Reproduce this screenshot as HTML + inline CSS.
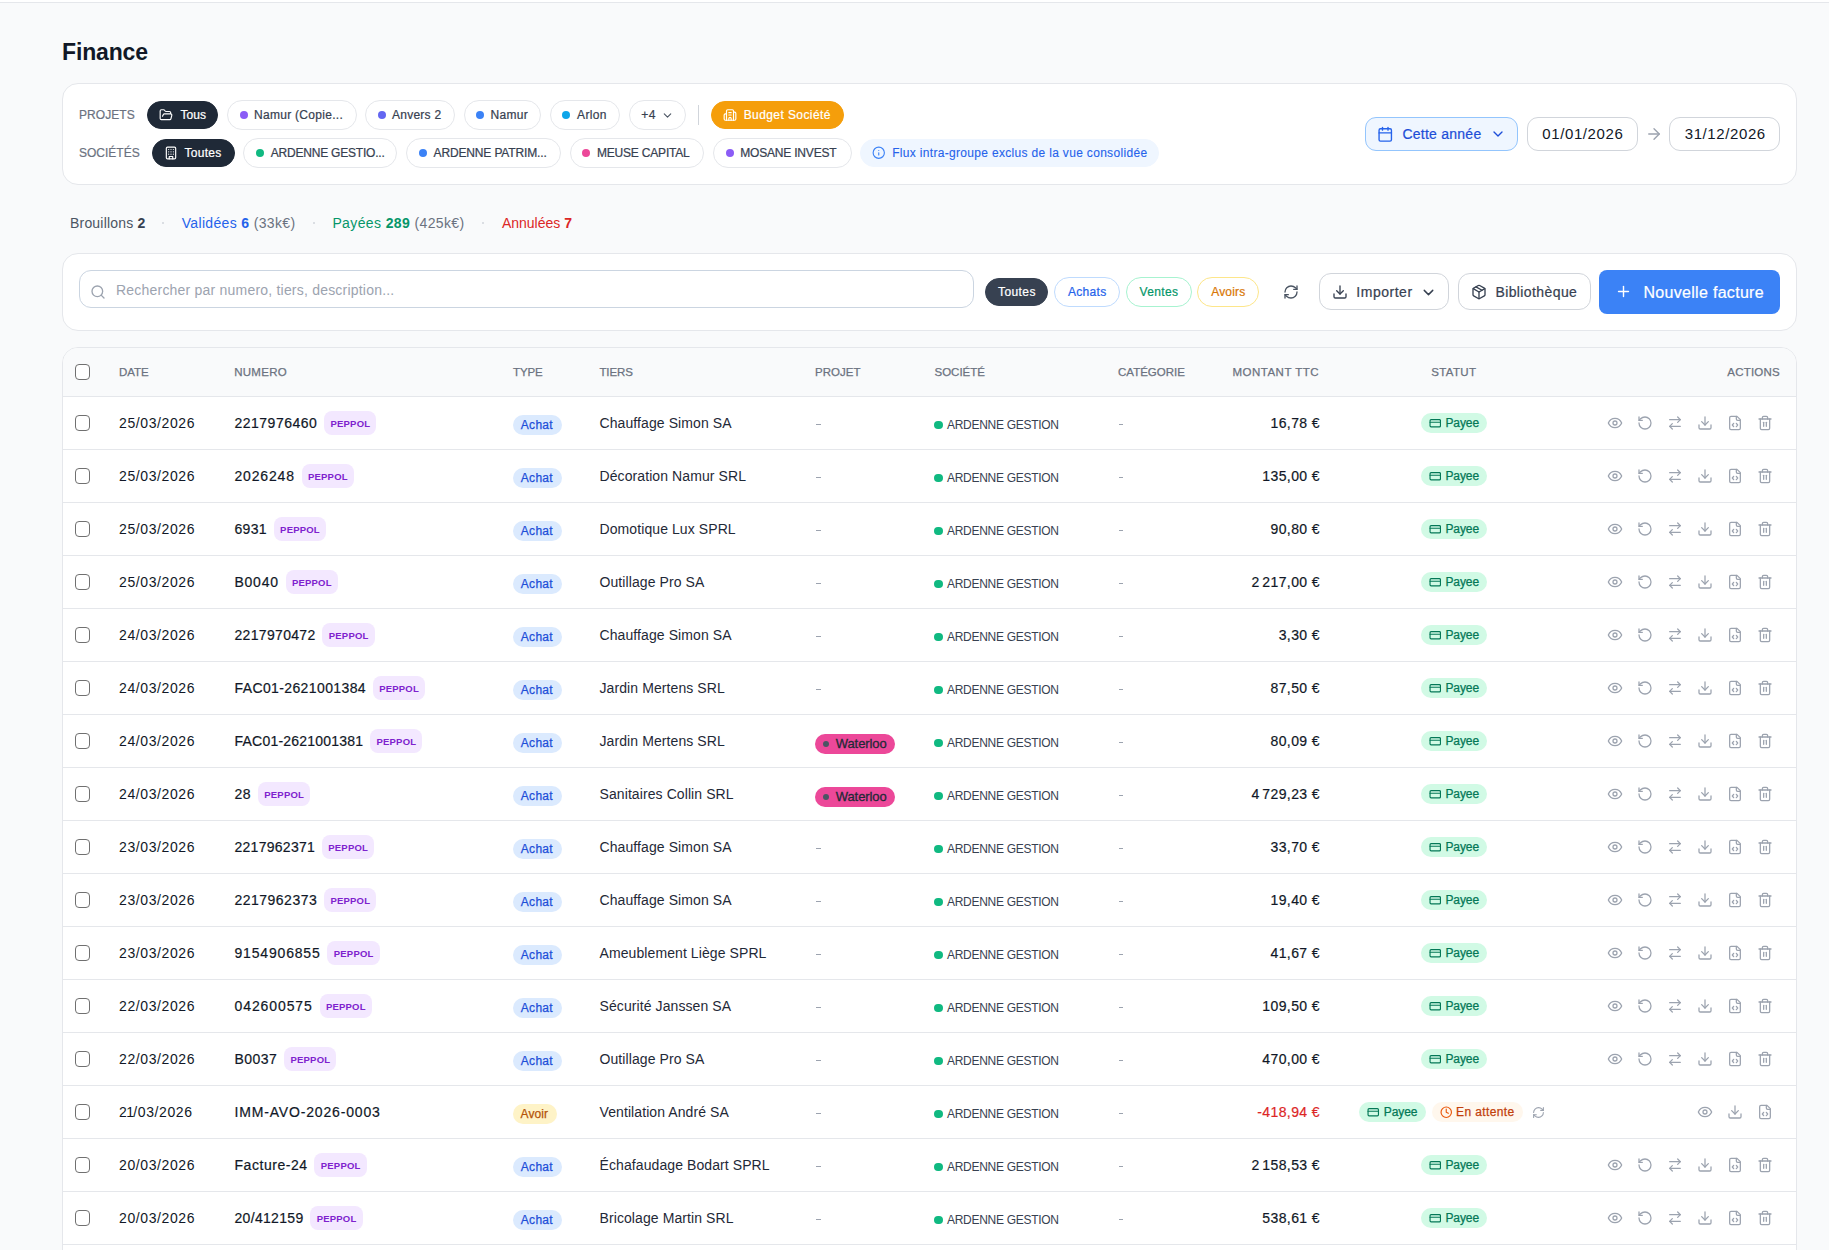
<!DOCTYPE html>
<html><head><meta charset="utf-8"><title>Finance</title>
<style>
html,body{margin:0;padding:0;}
body{width:1829px;height:1250px;overflow:hidden;background:#f9fafb;position:relative;font-family:"Liberation Sans",sans-serif;}
.b{position:absolute;box-sizing:border-box;}
.t{position:absolute;white-space:pre;}
.ic{position:absolute;display:block;}
.tbl{position:absolute;box-sizing:border-box;background:#fff;border:1px solid #e5e7eb;border-radius:16px;overflow:hidden;}
b{font-weight:700;}
</style></head><body>
<div class="b" style="left:0px;top:0px;width:1829px;height:2px;background:#fff"></div><div class="b" style="left:0px;top:2px;width:1829px;height:1px;background:#e5e7eb"></div><div class="t" style="left:62px;top:37.3px;height:30px;line-height:30px;font-size:23px;color:#111827;font-weight:700;letter-spacing:-0.15px;">Finance</div><div class="b" style="left:62px;top:83px;width:1735px;height:102px;background:#fff;border:1px solid #e5e7eb;border-radius:16px"></div><div class="t" style="left:79px;top:107.0px;height:16px;line-height:16px;font-size:12px;color:#6b7280;font-weight:400;letter-spacing:0.05px;-webkit-text-stroke:0.2px #6b7280;">PROJETS</div><div class="t" style="left:79px;top:145.0px;height:16px;line-height:16px;font-size:12px;color:#6b7280;font-weight:400;letter-spacing:0.0px;-webkit-text-stroke:0.2px #6b7280;">SOCIÉTÉS</div><div class="b" style="left:147px;top:101px;width:71.4px;height:28px;background:#1f2937;border:1px solid #1f2937;border-radius:999px;box-sizing:border-box"></div><div class="t" style="left:180.5px;top:106.5px;height:16px;line-height:16px;font-size:12px;color:#fff;font-weight:400;letter-spacing:0.02px;-webkit-text-stroke:0.22px #fff;">Tous</div><svg class="ic" style="left:158.5px;top:107.8px;width:14px;height:14px" viewBox="0 0 24 24" fill="none" stroke="#fff" stroke-width="2" stroke-linecap="round" stroke-linejoin="round"><path d="m6 14 1.5-2.9A2 2 0 0 1 9.24 10H20a2 2 0 0 1 1.94 2.5l-1.54 6a2 2 0 0 1-1.95 1.5H4a2 2 0 0 1-2-2V5a2 2 0 0 1 2-2h3.9a2 2 0 0 1 1.69.9l.81 1.2a2 2 0 0 0 1.67.9H18a2 2 0 0 1 2 2v2"/></svg><div class="b" style="left:226.5px;top:100px;width:130.0px;height:30px;background:#fff;border:1px solid #e5e7eb;border-radius:999px;box-sizing:border-box"></div><div class="b" style="left:239.5px;top:111.0px;width:8px;height:8px;background:#8b5cf6;border-radius:50%"></div><div class="t" style="left:254px;top:106.5px;height:16px;line-height:16px;font-size:12px;color:#374151;font-weight:400;letter-spacing:0.29px;-webkit-text-stroke:0.22px #374151;">Namur (Copie...</div><div class="b" style="left:365.2px;top:100px;width:90.0px;height:30px;background:#fff;border:1px solid #e5e7eb;border-radius:999px;box-sizing:border-box"></div><div class="b" style="left:378.2px;top:111.0px;width:8px;height:8px;background:#6366f1;border-radius:50%"></div><div class="t" style="left:392px;top:106.5px;height:16px;line-height:16px;font-size:12px;color:#374151;font-weight:400;letter-spacing:0.25px;-webkit-text-stroke:0.22px #374151;">Anvers 2</div><div class="b" style="left:463.7px;top:100px;width:77.50000000000006px;height:30px;background:#fff;border:1px solid #e5e7eb;border-radius:999px;box-sizing:border-box"></div><div class="b" style="left:476.4px;top:111.0px;width:8px;height:8px;background:#3b82f6;border-radius:50%"></div><div class="t" style="left:490.6px;top:106.5px;height:16px;line-height:16px;font-size:12px;color:#374151;font-weight:400;letter-spacing:0.28px;-webkit-text-stroke:0.22px #374151;">Namur</div><div class="b" style="left:549.9px;top:100px;width:70.10000000000002px;height:30px;background:#fff;border:1px solid #e5e7eb;border-radius:999px;box-sizing:border-box"></div><div class="b" style="left:562.4px;top:111.0px;width:8px;height:8px;background:#0ea5e9;border-radius:50%"></div><div class="t" style="left:577px;top:106.5px;height:16px;line-height:16px;font-size:12px;color:#374151;font-weight:400;letter-spacing:0.38px;-webkit-text-stroke:0.22px #374151;">Arlon</div><div class="b" style="left:628.8px;top:100px;width:57.0px;height:30px;background:#fff;border:1px solid #e5e7eb;border-radius:999px;box-sizing:border-box"></div><div class="t" style="left:641.3px;top:106.5px;height:16px;line-height:16px;font-size:12px;color:#374151;font-weight:400;letter-spacing:0.5px;-webkit-text-stroke:0.22px #374151;">+4</div><svg class="ic" style="left:660.5px;top:108.5px;width:13px;height:13px" viewBox="0 0 24 24" fill="none" stroke="#4b5563" stroke-width="2" stroke-linecap="round" stroke-linejoin="round"><path d="m6 9 6 6 6-6"/></svg><div class="b" style="left:698px;top:105px;width:1px;height:20px;background:#d1d5db"></div><div class="b" style="left:711px;top:101px;width:132.5px;height:28px;background:#f59e0b;border:1px solid #f59e0b;border-radius:999px;box-sizing:border-box"></div><div class="t" style="left:743.7px;top:106.5px;height:16px;line-height:16px;font-size:12px;color:#fff;font-weight:400;letter-spacing:0.41px;-webkit-text-stroke:0.22px #fff;">Budget Société</div><svg class="ic" style="left:722.5px;top:107.8px;width:14px;height:14px" viewBox="0 0 24 24" fill="none" stroke="#fff" stroke-width="2" stroke-linecap="round" stroke-linejoin="round"><path d="M10 12h4"/><path d="M10 8h4"/><path d="M14 21v-3a2 2 0 0 0-4 0v3"/><path d="M6 10H4a2 2 0 0 0-2 2v7a2 2 0 0 0 2 2h16a2 2 0 0 0 2-2V9a2 2 0 0 0-2-2h-2"/><path d="M6 21V5a2 2 0 0 1 2-2h8a2 2 0 0 1 2 2v16"/></svg><div class="b" style="left:151.8px;top:139px;width:83.19999999999999px;height:28px;background:#1f2937;border:1px solid #1f2937;border-radius:999px;box-sizing:border-box"></div><div class="t" style="left:184.5px;top:144.5px;height:16px;line-height:16px;font-size:12px;color:#fff;font-weight:400;letter-spacing:0.27px;-webkit-text-stroke:0.22px #fff;">Toutes</div><svg class="ic" style="left:164px;top:145.8px;width:14px;height:14px" viewBox="0 0 24 24" fill="none" stroke="#fff" stroke-width="2" stroke-linecap="round" stroke-linejoin="round"><rect width="16" height="20" x="4" y="2" rx="2" ry="2"/><path d="M9 22v-4h6v4"/><path d="M8 6h.01"/><path d="M16 6h.01"/><path d="M12 6h.01"/><path d="M12 10h.01"/><path d="M12 14h.01"/><path d="M16 10h.01"/><path d="M16 14h.01"/><path d="M8 10h.01"/><path d="M8 14h.01"/></svg><div class="b" style="left:243.4px;top:138px;width:153.99999999999997px;height:30px;background:#fff;border:1px solid #e5e7eb;border-radius:999px;box-sizing:border-box"></div><div class="b" style="left:256px;top:149.0px;width:8px;height:8px;background:#10b981;border-radius:50%"></div><div class="t" style="left:270.7px;top:144.5px;height:16px;line-height:16px;font-size:12px;color:#374151;font-weight:400;letter-spacing:-0.2px;-webkit-text-stroke:0.22px #374151;">ARDENNE GESTIO...</div><div class="b" style="left:406.3px;top:138px;width:154.49999999999994px;height:30px;background:#fff;border:1px solid #e5e7eb;border-radius:999px;box-sizing:border-box"></div><div class="b" style="left:419px;top:149.0px;width:8px;height:8px;background:#3b82f6;border-radius:50%"></div><div class="t" style="left:433.6px;top:144.5px;height:16px;line-height:16px;font-size:12px;color:#374151;font-weight:400;letter-spacing:-0.15px;-webkit-text-stroke:0.22px #374151;">ARDENNE PATRIM...</div><div class="b" style="left:569.7px;top:138px;width:134.5px;height:30px;background:#fff;border:1px solid #e5e7eb;border-radius:999px;box-sizing:border-box"></div><div class="b" style="left:582.3px;top:149.0px;width:8px;height:8px;background:#ec4899;border-radius:50%"></div><div class="t" style="left:597px;top:144.5px;height:16px;line-height:16px;font-size:12px;color:#374151;font-weight:400;letter-spacing:-0.2px;-webkit-text-stroke:0.22px #374151;">MEUSE CAPITAL</div><div class="b" style="left:713.4px;top:138px;width:138.20000000000005px;height:30px;background:#fff;border:1px solid #e5e7eb;border-radius:999px;box-sizing:border-box"></div><div class="b" style="left:726.2px;top:149.0px;width:8px;height:8px;background:#8b5cf6;border-radius:50%"></div><div class="t" style="left:740.3px;top:144.5px;height:16px;line-height:16px;font-size:12px;color:#374151;font-weight:400;letter-spacing:-0.2px;-webkit-text-stroke:0.22px #374151;">MOSANE INVEST</div><div class="b" style="left:859.9px;top:139px;width:299.4px;height:28px;background:#eff6ff;border:1px solid #eff6ff;border-radius:999px;box-sizing:border-box"></div><div class="t" style="left:892.2px;top:145.0px;height:16px;line-height:16px;font-size:12px;color:#2563eb;font-weight:400;letter-spacing:0.32px;-webkit-text-stroke:0.1px #2563eb;">Flux intra-groupe exclus de la vue consolidée</div><svg class="ic" style="left:872px;top:146.2px;width:13.5px;height:13.5px" viewBox="0 0 24 24" fill="none" stroke="#3b82f6" stroke-width="2" stroke-linecap="round" stroke-linejoin="round"><circle cx="12" cy="12" r="10"/><path d="M12 16v-4"/><path d="M12 8h.01"/></svg><div class="b" style="left:1365.2px;top:117px;width:153.3px;height:34px;background:#eff6ff;border:1px solid #93c5fd;border-radius:11px;box-sizing:border-box"></div><svg class="ic" style="left:1377.4px;top:125.8px;width:16.5px;height:16.5px" viewBox="0 0 24 24" fill="none" stroke="#2563eb" stroke-width="2" stroke-linecap="round" stroke-linejoin="round"><path d="M8 2v4"/><path d="M16 2v4"/><rect width="18" height="18" x="3" y="4" rx="2"/><path d="M3 10h18"/></svg><div class="t" style="left:1402.4px;top:125.0px;height:18px;line-height:18px;font-size:14px;color:#1d4ed8;font-weight:400;letter-spacing:0.25px;-webkit-text-stroke:0.22px #1d4ed8;">Cette année</div><svg class="ic" style="left:1490.4px;top:126px;width:16px;height:16px" viewBox="0 0 24 24" fill="none" stroke="#1d4ed8" stroke-width="2" stroke-linecap="round" stroke-linejoin="round"><path d="m6 9 6 6 6-6"/></svg><div class="b" style="left:1527.3px;top:117px;width:111.2px;height:34px;background:#fff;border:1px solid #d1d5db;border-radius:11px;box-sizing:border-box"></div><div class="t" style="left:1542.3px;top:124.0px;height:20px;line-height:20px;font-size:15px;color:#111827;font-weight:400;letter-spacing:0.6px;">01/01/2026</div><svg class="ic" style="left:1644.7px;top:125px;width:18px;height:18px" viewBox="0 0 24 24" fill="none" stroke="#9ca3af" stroke-width="1.8" stroke-linecap="round" stroke-linejoin="round"><path d="M5 12h14"/><path d="m12 5 7 7-7 7"/></svg><div class="b" style="left:1668.9px;top:117px;width:111.4px;height:34px;background:#fff;border:1px solid #d1d5db;border-radius:11px;box-sizing:border-box"></div><div class="t" style="left:1684.7px;top:124.0px;height:20px;line-height:20px;font-size:15px;color:#111827;font-weight:400;letter-spacing:0.6px;">31/12/2026</div><div class="t" style="left:70px;top:214.0px;height:18px;line-height:18px;font-size:14px;color:#4b5563;font-weight:400;letter-spacing:0.19px;">Brouillons <b style="color:#374151">2</b></div><div class="b" style="left:162.4px;top:222px;width:2px;height:2px;background:#d1d5db;border-radius:50%"></div><div class="t" style="left:181.7px;top:214.0px;height:18px;line-height:18px;font-size:14px;color:#2563eb;font-weight:400;letter-spacing:0.34px;">Validées <b>6</b> <span style="color:#6b7280">(33k€)</span></div><div class="b" style="left:313.4px;top:222px;width:2px;height:2px;background:#d1d5db;border-radius:50%"></div><div class="t" style="left:332.4px;top:214.0px;height:18px;line-height:18px;font-size:14px;color:#059669;font-weight:400;letter-spacing:0.38px;">Payées <b>289</b> <span style="color:#6b7280">(425k€)</span></div><div class="b" style="left:482px;top:222px;width:2px;height:2px;background:#d1d5db;border-radius:50%"></div><div class="t" style="left:501.9px;top:214.0px;height:18px;line-height:18px;font-size:14px;color:#dc2626;font-weight:400;letter-spacing:0.0px;">Annulées <b>7</b></div><div class="b" style="left:62px;top:253px;width:1735px;height:78px;background:#fff;border:1px solid #e5e7eb;border-radius:16px"></div><div class="b" style="left:78.7px;top:270px;width:895px;height:38px;background:#fff;border:1px solid #cbd5e1;border-radius:12px;box-sizing:border-box"></div><svg class="ic" style="left:90.2px;top:284px;width:16px;height:16px" viewBox="0 0 24 24" fill="none" stroke="#9ca3af" stroke-width="2" stroke-linecap="round" stroke-linejoin="round"><circle cx="11" cy="11" r="8"/><path d="m21 21-4.3-4.3"/></svg><div class="t" style="left:116px;top:280.5px;height:18px;line-height:18px;font-size:14px;color:#9ca3af;font-weight:400;letter-spacing:0.21px;">Rechercher par numero, tiers, description...</div><div class="b" style="left:985.3px;top:278px;width:63.200000000000045px;height:28px;background:#374151;border:1px solid #374151;border-radius:999px;box-sizing:border-box"></div><div class="t" style="left:998px;top:283.5px;height:16px;line-height:16px;font-size:12px;color:#fff;font-weight:400;letter-spacing:0.42px;-webkit-text-stroke:0.22px #fff;">Toutes</div><div class="b" style="left:1054.4px;top:277px;width:65.39999999999986px;height:30px;background:#fff;border:1px solid #bfdbfe;border-radius:999px;box-sizing:border-box"></div><div class="t" style="left:1068px;top:283.5px;height:16px;line-height:16px;font-size:12px;color:#2563eb;font-weight:400;letter-spacing:0.31px;-webkit-text-stroke:0.22px #2563eb;">Achats</div><div class="b" style="left:1126px;top:277px;width:65.59999999999991px;height:30px;background:#fff;border:1px solid #a7f3d0;border-radius:999px;box-sizing:border-box"></div><div class="t" style="left:1139.6px;top:283.5px;height:16px;line-height:16px;font-size:12px;color:#059669;font-weight:400;letter-spacing:0.35px;-webkit-text-stroke:0.22px #059669;">Ventes</div><div class="b" style="left:1197.4px;top:277px;width:61.299999999999955px;height:30px;background:#fff;border:1px solid #fde68a;border-radius:999px;box-sizing:border-box"></div><div class="t" style="left:1211.2px;top:283.5px;height:16px;line-height:16px;font-size:12px;color:#d97706;font-weight:400;letter-spacing:0.2px;-webkit-text-stroke:0.22px #d97706;">Avoirs</div><svg class="ic" style="left:1283px;top:283.8px;width:16px;height:16px" viewBox="0 0 24 24" fill="none" stroke="#4b5563" stroke-width="2" stroke-linecap="round" stroke-linejoin="round"><path d="M3 12a9 9 0 0 1 9-9 9.75 9.75 0 0 1 6.74 2.74L21 8"/><path d="M21 3v5h-5"/><path d="M21 12a9 9 0 0 1-9 9 9.75 9.75 0 0 1-6.74-2.74L3 16"/><path d="M8 16H3v5"/></svg><div class="b" style="left:1319.4px;top:273.4px;width:130px;height:37px;background:#fff;border:1px solid #d1d5db;border-radius:12px;box-sizing:border-box"></div><svg class="ic" style="left:1331.5px;top:283.5px;width:16px;height:16px" viewBox="0 0 24 24" fill="none" stroke="#374151" stroke-width="2" stroke-linecap="round" stroke-linejoin="round"><path d="M21 15v4a2 2 0 0 1-2 2H5a2 2 0 0 1-2-2v-4"/><polyline points="7 10 12 15 17 10"/><line x1="12" x2="12" y1="15" y2="3"/></svg><div class="t" style="left:1356.3px;top:283.0px;height:18px;line-height:18px;font-size:14px;color:#374151;font-weight:400;letter-spacing:0.52px;-webkit-text-stroke:0.22px #374151;">Importer</div><svg class="ic" style="left:1420.4px;top:283.5px;width:17px;height:17px" viewBox="0 0 24 24" fill="none" stroke="#374151" stroke-width="2" stroke-linecap="round" stroke-linejoin="round"><path d="m6 9 6 6 6-6"/></svg><div class="b" style="left:1458px;top:273.4px;width:132.5px;height:37px;background:#fff;border:1px solid #d1d5db;border-radius:12px;box-sizing:border-box"></div><svg class="ic" style="left:1470.5px;top:284px;width:16px;height:16px" viewBox="0 0 24 24" fill="none" stroke="#374151" stroke-width="2" stroke-linecap="round" stroke-linejoin="round"><path d="m7.5 4.27 9 5.15"/><path d="M21 8a2 2 0 0 0-1-1.73l-7-4a2 2 0 0 0-2 0l-7 4A2 2 0 0 0 3 8v8a2 2 0 0 0 1 1.73l7 4a2 2 0 0 0 2 0l7-4A2 2 0 0 0 21 16Z"/><path d="m3.3 7 8.7 5 8.7-5"/><path d="M12 22V12"/></svg><div class="t" style="left:1495.4px;top:283.0px;height:18px;line-height:18px;font-size:14px;color:#374151;font-weight:400;letter-spacing:0.4px;-webkit-text-stroke:0.22px #374151;">Bibliothèque</div><div class="b" style="left:1598.8px;top:270.2px;width:181.3px;height:43.4px;background:#3b82f6;border-radius:8px"></div><svg class="ic" style="left:1614.5px;top:283px;width:17px;height:17px" viewBox="0 0 24 24" fill="none" stroke="#fff" stroke-width="2" stroke-linecap="round" stroke-linejoin="round"><path d="M5 12h14"/><path d="M12 5v14"/></svg><div class="t" style="left:1643.5px;top:282.2px;height:21px;line-height:21px;font-size:16px;color:#fff;font-weight:400;letter-spacing:0.3px;-webkit-text-stroke:0.22px #fff;">Nouvelle facture</div><div class="tbl" style="left:62px;top:347px;width:1735px;height:943px"><div class="b" style="left:0px;top:0px;width:1733px;height:48px;background:#f9fafb"></div><div class="b" style="left:0px;top:48px;width:1733px;height:1px;background:#e5e7eb"></div><div class="b" style="left:11.799999999999997px;top:16.25px;width:15.5px;height:15.5px;border:1.4px solid #707070;border-radius:4px;box-sizing:border-box;background:#fff"></div><div class="t" style="left:56px;top:16.5px;height:15px;line-height:15px;font-size:11.5px;color:#6b7280;font-weight:400;letter-spacing:-0.08px;-webkit-text-stroke:0.25px #6b7280;">DATE</div><div class="t" style="left:171.2px;top:16.5px;height:15px;line-height:15px;font-size:11.5px;color:#6b7280;font-weight:400;letter-spacing:0.28px;-webkit-text-stroke:0.25px #6b7280;">NUMERO</div><div class="t" style="left:450px;top:16.5px;height:15px;line-height:15px;font-size:11.5px;color:#6b7280;font-weight:400;letter-spacing:-0.11px;-webkit-text-stroke:0.25px #6b7280;">TYPE</div><div class="t" style="left:536.4px;top:16.5px;height:15px;line-height:15px;font-size:11.5px;color:#6b7280;font-weight:400;letter-spacing:-0.1px;-webkit-text-stroke:0.25px #6b7280;">TIERS</div><div class="t" style="left:752px;top:16.5px;height:15px;line-height:15px;font-size:11.5px;color:#6b7280;font-weight:400;letter-spacing:0.05px;-webkit-text-stroke:0.25px #6b7280;">PROJET</div><div class="t" style="left:871.5px;top:16.5px;height:15px;line-height:15px;font-size:11.5px;color:#6b7280;font-weight:400;letter-spacing:0.0px;-webkit-text-stroke:0.25px #6b7280;">SOCIÉTÉ</div><div class="t" style="left:1055px;top:16.5px;height:15px;line-height:15px;font-size:11.5px;color:#6b7280;font-weight:400;letter-spacing:0.01px;-webkit-text-stroke:0.25px #6b7280;">CATÉGORIE</div><div class="t" style="left:1169.5px;top:16.5px;height:15px;line-height:15px;font-size:11.5px;color:#6b7280;font-weight:400;letter-spacing:0.49px;-webkit-text-stroke:0.25px #6b7280;">MONTANT TTC</div><div class="t" style="left:1368.2px;top:16.5px;height:15px;line-height:15px;font-size:11.5px;color:#6b7280;font-weight:400;letter-spacing:0.35px;-webkit-text-stroke:0.25px #6b7280;">STATUT</div><div class="t" style="left:1664.3px;top:16.5px;height:15px;line-height:15px;font-size:11.5px;color:#6b7280;font-weight:400;letter-spacing:0.2px;-webkit-text-stroke:0.25px #6b7280;">ACTIONS</div><div class="b" style="left:0px;top:101px;width:1733px;height:1px;background:#e5e7eb"></div><div class="b" style="left:11.799999999999997px;top:67.25px;width:15.5px;height:15.5px;border:1.4px solid #707070;border-radius:4px;box-sizing:border-box;background:#fff"></div><div class="t" style="left:56px;top:66.0px;height:18px;line-height:18px;font-size:14px;color:#111827;font-weight:400;letter-spacing:0.6px;">25/03/2026</div><div class="t" style="left:171.5px;top:66.0px;height:18px;line-height:18px;font-size:14px;color:#111827;font-weight:400;letter-spacing:0.493px;-webkit-text-stroke:0.2px #111827;">2217976460</div><div class="b" style="left:261.1px;top:63px;width:52.4px;height:24px;background:#f3e8ff;border-radius:8px"></div><div class="t" style="left:267.5px;top:69.60000000000002px;height:12px;line-height:12px;font-size:9.5px;color:#7e22ce;font-weight:700;letter-spacing:0.2px;">PEPPOL</div><div class="b" style="left:449.6px;top:67px;width:49px;height:20px;background:#dbeafe;border-radius:999px"></div><div class="t" style="left:457.79999999999995px;top:68.60000000000002px;height:16px;line-height:16px;font-size:12px;color:#1d4ed8;font-weight:400;letter-spacing:0.3px;-webkit-text-stroke:0.25px #1d4ed8;">Achat</div><div class="t" style="left:536.5px;top:66.0px;height:18px;line-height:18px;font-size:14px;color:#1f2937;font-weight:400;letter-spacing:0.09px;">Chauffage Simon SA</div><div class="b" style="left:752.9px;top:76px;width:4.8px;height:1.3px;background:#9ca3af"></div><div class="b" style="left:871.3px;top:73px;width:8.3px;height:8.3px;background:#10b981;border-radius:50%"></div><div class="t" style="left:884px;top:69.0px;height:16px;line-height:16px;font-size:12px;color:#374151;font-weight:400;letter-spacing:-0.29px;">ARDENNE GESTION</div><div class="b" style="left:1055.6px;top:75.5px;width:4.8px;height:1.3px;background:#9ca3af"></div><div class="t" style="right:476px;top:65px;height:20px;line-height:20px;font-size:14px;color:#111827;letter-spacing:0.4px;-webkit-text-stroke:0.2px #111827">16,78 €</div><div class="b" style="left:1358px;top:65px;width:66.3px;height:20px;background:#d1fae5;border-radius:999px"></div><svg class="ic" style="left:1365.5px;top:69px;width:12.5px;height:12.5px" viewBox="0 0 24 24" fill="none" stroke="#047857" stroke-width="2.2" stroke-linecap="round" stroke-linejoin="round"><rect width="20" height="14" x="2" y="5" rx="2"/><line x1="2" x2="22" y1="10" y2="10"/></svg><div class="t" style="left:1382.4px;top:67.0px;height:16px;line-height:16px;font-size:12px;color:#047857;font-weight:400;letter-spacing:-0.09px;-webkit-text-stroke:0.25px #047857;">Payee</div><svg class="ic" style="left:1544px;top:67px;width:16px;height:16px" viewBox="0 0 24 24" fill="none" stroke="#9ca3af" stroke-width="1.9" stroke-linecap="round" stroke-linejoin="round"><path d="M2 12s3-7 10-7 10 7 10 7-3 7-10 7-10-7-10-7Z"/><circle cx="12" cy="12" r="3"/></svg><svg class="ic" style="left:1574px;top:67px;width:16px;height:16px" viewBox="0 0 24 24" fill="none" stroke="#9ca3af" stroke-width="1.9" stroke-linecap="round" stroke-linejoin="round"><path d="M3 12a9 9 0 1 0 9-9 9.75 9.75 0 0 0-6.74 2.74L3 8"/><path d="M3 3v5h5"/></svg><svg class="ic" style="left:1604px;top:67px;width:16px;height:16px" viewBox="0 0 24 24" fill="none" stroke="#9ca3af" stroke-width="1.9" stroke-linecap="round" stroke-linejoin="round"><path d="m16 3 4 4-4 4"/><path d="M20 7H4"/><path d="m8 21-4-4 4-4"/><path d="M4 17h16"/></svg><svg class="ic" style="left:1634px;top:67px;width:16px;height:16px" viewBox="0 0 24 24" fill="none" stroke="#9ca3af" stroke-width="1.9" stroke-linecap="round" stroke-linejoin="round"><path d="M21 15v4a2 2 0 0 1-2 2H5a2 2 0 0 1-2-2v-4"/><polyline points="7 10 12 15 17 10"/><line x1="12" x2="12" y1="15" y2="3"/></svg><svg class="ic" style="left:1664px;top:67px;width:16px;height:16px" viewBox="0 0 24 24" fill="none" stroke="#9ca3af" stroke-width="1.9" stroke-linecap="round" stroke-linejoin="round"><path d="M10 12.5 8 15l2 2.5"/><path d="m14 12.5 2 2.5-2 2.5"/><path d="M14 2v4a2 2 0 0 0 2 2h4"/><path d="M15 2H6a2 2 0 0 0-2 2v16a2 2 0 0 0 2 2h12a2 2 0 0 0 2-2V7z"/></svg><svg class="ic" style="left:1694px;top:67px;width:16px;height:16px" viewBox="0 0 24 24" fill="none" stroke="#9ca3af" stroke-width="1.9" stroke-linecap="round" stroke-linejoin="round"><path d="M3 6h18"/><path d="M19 6v14c0 1-1 2-2 2H7c-1 0-2-1-2-2V6"/><path d="M8 6V4c0-1 1-2 2-2h4c1 0 2 1 2 2v2"/><line x1="10" x2="10" y1="11" y2="17"/><line x1="14" x2="14" y1="11" y2="17"/></svg><div class="b" style="left:0px;top:154px;width:1733px;height:1px;background:#e5e7eb"></div><div class="b" style="left:11.799999999999997px;top:120.25px;width:15.5px;height:15.5px;border:1.4px solid #707070;border-radius:4px;box-sizing:border-box;background:#fff"></div><div class="t" style="left:56px;top:119.0px;height:18px;line-height:18px;font-size:14px;color:#111827;font-weight:400;letter-spacing:0.6px;">25/03/2026</div><div class="t" style="left:171.5px;top:119.0px;height:18px;line-height:18px;font-size:14px;color:#111827;font-weight:400;letter-spacing:0.826px;-webkit-text-stroke:0.2px #111827;">2026248</div><div class="b" style="left:238.60000000000002px;top:116px;width:52.4px;height:24px;background:#f3e8ff;border-radius:8px"></div><div class="t" style="left:245.0px;top:122.60000000000002px;height:12px;line-height:12px;font-size:9.5px;color:#7e22ce;font-weight:700;letter-spacing:0.2px;">PEPPOL</div><div class="b" style="left:449.6px;top:120px;width:49px;height:20px;background:#dbeafe;border-radius:999px"></div><div class="t" style="left:457.79999999999995px;top:121.60000000000002px;height:16px;line-height:16px;font-size:12px;color:#1d4ed8;font-weight:400;letter-spacing:0.3px;-webkit-text-stroke:0.25px #1d4ed8;">Achat</div><div class="t" style="left:536.5px;top:119.0px;height:18px;line-height:18px;font-size:14px;color:#1f2937;font-weight:400;letter-spacing:0.09px;">Décoration Namur SRL</div><div class="b" style="left:752.9px;top:129px;width:4.8px;height:1.3px;background:#9ca3af"></div><div class="b" style="left:871.3px;top:126px;width:8.3px;height:8.3px;background:#10b981;border-radius:50%"></div><div class="t" style="left:884px;top:122.0px;height:16px;line-height:16px;font-size:12px;color:#374151;font-weight:400;letter-spacing:-0.29px;">ARDENNE GESTION</div><div class="b" style="left:1055.6px;top:128.5px;width:4.8px;height:1.3px;background:#9ca3af"></div><div class="t" style="right:476px;top:118px;height:20px;line-height:20px;font-size:14px;color:#111827;letter-spacing:0.4px;-webkit-text-stroke:0.2px #111827">135,00 €</div><div class="b" style="left:1358px;top:118px;width:66.3px;height:20px;background:#d1fae5;border-radius:999px"></div><svg class="ic" style="left:1365.5px;top:122px;width:12.5px;height:12.5px" viewBox="0 0 24 24" fill="none" stroke="#047857" stroke-width="2.2" stroke-linecap="round" stroke-linejoin="round"><rect width="20" height="14" x="2" y="5" rx="2"/><line x1="2" x2="22" y1="10" y2="10"/></svg><div class="t" style="left:1382.4px;top:120.0px;height:16px;line-height:16px;font-size:12px;color:#047857;font-weight:400;letter-spacing:-0.09px;-webkit-text-stroke:0.25px #047857;">Payee</div><svg class="ic" style="left:1544px;top:120px;width:16px;height:16px" viewBox="0 0 24 24" fill="none" stroke="#9ca3af" stroke-width="1.9" stroke-linecap="round" stroke-linejoin="round"><path d="M2 12s3-7 10-7 10 7 10 7-3 7-10 7-10-7-10-7Z"/><circle cx="12" cy="12" r="3"/></svg><svg class="ic" style="left:1574px;top:120px;width:16px;height:16px" viewBox="0 0 24 24" fill="none" stroke="#9ca3af" stroke-width="1.9" stroke-linecap="round" stroke-linejoin="round"><path d="M3 12a9 9 0 1 0 9-9 9.75 9.75 0 0 0-6.74 2.74L3 8"/><path d="M3 3v5h5"/></svg><svg class="ic" style="left:1604px;top:120px;width:16px;height:16px" viewBox="0 0 24 24" fill="none" stroke="#9ca3af" stroke-width="1.9" stroke-linecap="round" stroke-linejoin="round"><path d="m16 3 4 4-4 4"/><path d="M20 7H4"/><path d="m8 21-4-4 4-4"/><path d="M4 17h16"/></svg><svg class="ic" style="left:1634px;top:120px;width:16px;height:16px" viewBox="0 0 24 24" fill="none" stroke="#9ca3af" stroke-width="1.9" stroke-linecap="round" stroke-linejoin="round"><path d="M21 15v4a2 2 0 0 1-2 2H5a2 2 0 0 1-2-2v-4"/><polyline points="7 10 12 15 17 10"/><line x1="12" x2="12" y1="15" y2="3"/></svg><svg class="ic" style="left:1664px;top:120px;width:16px;height:16px" viewBox="0 0 24 24" fill="none" stroke="#9ca3af" stroke-width="1.9" stroke-linecap="round" stroke-linejoin="round"><path d="M10 12.5 8 15l2 2.5"/><path d="m14 12.5 2 2.5-2 2.5"/><path d="M14 2v4a2 2 0 0 0 2 2h4"/><path d="M15 2H6a2 2 0 0 0-2 2v16a2 2 0 0 0 2 2h12a2 2 0 0 0 2-2V7z"/></svg><svg class="ic" style="left:1694px;top:120px;width:16px;height:16px" viewBox="0 0 24 24" fill="none" stroke="#9ca3af" stroke-width="1.9" stroke-linecap="round" stroke-linejoin="round"><path d="M3 6h18"/><path d="M19 6v14c0 1-1 2-2 2H7c-1 0-2-1-2-2V6"/><path d="M8 6V4c0-1 1-2 2-2h4c1 0 2 1 2 2v2"/><line x1="10" x2="10" y1="11" y2="17"/><line x1="14" x2="14" y1="11" y2="17"/></svg><div class="b" style="left:0px;top:207px;width:1733px;height:1px;background:#e5e7eb"></div><div class="b" style="left:11.799999999999997px;top:173.25px;width:15.5px;height:15.5px;border:1.4px solid #707070;border-radius:4px;box-sizing:border-box;background:#fff"></div><div class="t" style="left:56px;top:172.0px;height:18px;line-height:18px;font-size:14px;color:#111827;font-weight:400;letter-spacing:0.6px;">25/03/2026</div><div class="t" style="left:171.5px;top:172.0px;height:18px;line-height:18px;font-size:14px;color:#111827;font-weight:400;letter-spacing:0.311px;-webkit-text-stroke:0.2px #111827;">6931</div><div class="b" style="left:210.7px;top:169px;width:52.4px;height:24px;background:#f3e8ff;border-radius:8px"></div><div class="t" style="left:217.09999999999997px;top:175.60000000000002px;height:12px;line-height:12px;font-size:9.5px;color:#7e22ce;font-weight:700;letter-spacing:0.2px;">PEPPOL</div><div class="b" style="left:449.6px;top:173px;width:49px;height:20px;background:#dbeafe;border-radius:999px"></div><div class="t" style="left:457.79999999999995px;top:174.60000000000002px;height:16px;line-height:16px;font-size:12px;color:#1d4ed8;font-weight:400;letter-spacing:0.3px;-webkit-text-stroke:0.25px #1d4ed8;">Achat</div><div class="t" style="left:536.5px;top:172.0px;height:18px;line-height:18px;font-size:14px;color:#1f2937;font-weight:400;letter-spacing:0.09px;">Domotique Lux SPRL</div><div class="b" style="left:752.9px;top:182px;width:4.8px;height:1.3px;background:#9ca3af"></div><div class="b" style="left:871.3px;top:179px;width:8.3px;height:8.3px;background:#10b981;border-radius:50%"></div><div class="t" style="left:884px;top:175.0px;height:16px;line-height:16px;font-size:12px;color:#374151;font-weight:400;letter-spacing:-0.29px;">ARDENNE GESTION</div><div class="b" style="left:1055.6px;top:181.5px;width:4.8px;height:1.3px;background:#9ca3af"></div><div class="t" style="right:476px;top:171px;height:20px;line-height:20px;font-size:14px;color:#111827;letter-spacing:0.4px;-webkit-text-stroke:0.2px #111827">90,80 €</div><div class="b" style="left:1358px;top:171px;width:66.3px;height:20px;background:#d1fae5;border-radius:999px"></div><svg class="ic" style="left:1365.5px;top:175px;width:12.5px;height:12.5px" viewBox="0 0 24 24" fill="none" stroke="#047857" stroke-width="2.2" stroke-linecap="round" stroke-linejoin="round"><rect width="20" height="14" x="2" y="5" rx="2"/><line x1="2" x2="22" y1="10" y2="10"/></svg><div class="t" style="left:1382.4px;top:173.0px;height:16px;line-height:16px;font-size:12px;color:#047857;font-weight:400;letter-spacing:-0.09px;-webkit-text-stroke:0.25px #047857;">Payee</div><svg class="ic" style="left:1544px;top:173px;width:16px;height:16px" viewBox="0 0 24 24" fill="none" stroke="#9ca3af" stroke-width="1.9" stroke-linecap="round" stroke-linejoin="round"><path d="M2 12s3-7 10-7 10 7 10 7-3 7-10 7-10-7-10-7Z"/><circle cx="12" cy="12" r="3"/></svg><svg class="ic" style="left:1574px;top:173px;width:16px;height:16px" viewBox="0 0 24 24" fill="none" stroke="#9ca3af" stroke-width="1.9" stroke-linecap="round" stroke-linejoin="round"><path d="M3 12a9 9 0 1 0 9-9 9.75 9.75 0 0 0-6.74 2.74L3 8"/><path d="M3 3v5h5"/></svg><svg class="ic" style="left:1604px;top:173px;width:16px;height:16px" viewBox="0 0 24 24" fill="none" stroke="#9ca3af" stroke-width="1.9" stroke-linecap="round" stroke-linejoin="round"><path d="m16 3 4 4-4 4"/><path d="M20 7H4"/><path d="m8 21-4-4 4-4"/><path d="M4 17h16"/></svg><svg class="ic" style="left:1634px;top:173px;width:16px;height:16px" viewBox="0 0 24 24" fill="none" stroke="#9ca3af" stroke-width="1.9" stroke-linecap="round" stroke-linejoin="round"><path d="M21 15v4a2 2 0 0 1-2 2H5a2 2 0 0 1-2-2v-4"/><polyline points="7 10 12 15 17 10"/><line x1="12" x2="12" y1="15" y2="3"/></svg><svg class="ic" style="left:1664px;top:173px;width:16px;height:16px" viewBox="0 0 24 24" fill="none" stroke="#9ca3af" stroke-width="1.9" stroke-linecap="round" stroke-linejoin="round"><path d="M10 12.5 8 15l2 2.5"/><path d="m14 12.5 2 2.5-2 2.5"/><path d="M14 2v4a2 2 0 0 0 2 2h4"/><path d="M15 2H6a2 2 0 0 0-2 2v16a2 2 0 0 0 2 2h12a2 2 0 0 0 2-2V7z"/></svg><svg class="ic" style="left:1694px;top:173px;width:16px;height:16px" viewBox="0 0 24 24" fill="none" stroke="#9ca3af" stroke-width="1.9" stroke-linecap="round" stroke-linejoin="round"><path d="M3 6h18"/><path d="M19 6v14c0 1-1 2-2 2H7c-1 0-2-1-2-2V6"/><path d="M8 6V4c0-1 1-2 2-2h4c1 0 2 1 2 2v2"/><line x1="10" x2="10" y1="11" y2="17"/><line x1="14" x2="14" y1="11" y2="17"/></svg><div class="b" style="left:0px;top:260px;width:1733px;height:1px;background:#e5e7eb"></div><div class="b" style="left:11.799999999999997px;top:226.25px;width:15.5px;height:15.5px;border:1.4px solid #707070;border-radius:4px;box-sizing:border-box;background:#fff"></div><div class="t" style="left:56px;top:225.0px;height:18px;line-height:18px;font-size:14px;color:#111827;font-weight:400;letter-spacing:0.6px;">25/03/2026</div><div class="t" style="left:171.5px;top:225.0px;height:18px;line-height:18px;font-size:14px;color:#111827;font-weight:400;letter-spacing:0.743px;-webkit-text-stroke:0.2px #111827;">B0040</div><div class="b" style="left:222.5px;top:222px;width:52.4px;height:24px;background:#f3e8ff;border-radius:8px"></div><div class="t" style="left:228.89999999999998px;top:228.60000000000002px;height:12px;line-height:12px;font-size:9.5px;color:#7e22ce;font-weight:700;letter-spacing:0.2px;">PEPPOL</div><div class="b" style="left:449.6px;top:226px;width:49px;height:20px;background:#dbeafe;border-radius:999px"></div><div class="t" style="left:457.79999999999995px;top:227.60000000000002px;height:16px;line-height:16px;font-size:12px;color:#1d4ed8;font-weight:400;letter-spacing:0.3px;-webkit-text-stroke:0.25px #1d4ed8;">Achat</div><div class="t" style="left:536.5px;top:225.0px;height:18px;line-height:18px;font-size:14px;color:#1f2937;font-weight:400;letter-spacing:0.09px;">Outillage Pro SA</div><div class="b" style="left:752.9px;top:235px;width:4.8px;height:1.3px;background:#9ca3af"></div><div class="b" style="left:871.3px;top:232px;width:8.3px;height:8.3px;background:#10b981;border-radius:50%"></div><div class="t" style="left:884px;top:228.0px;height:16px;line-height:16px;font-size:12px;color:#374151;font-weight:400;letter-spacing:-0.29px;">ARDENNE GESTION</div><div class="b" style="left:1055.6px;top:234.5px;width:4.8px;height:1.3px;background:#9ca3af"></div><div class="t" style="right:476px;top:224px;height:20px;line-height:20px;font-size:14px;color:#111827;letter-spacing:0.4px;-webkit-text-stroke:0.2px #111827">2<span style="display:inline-block;width:2.6px"></span>217,00 €</div><div class="b" style="left:1358px;top:224px;width:66.3px;height:20px;background:#d1fae5;border-radius:999px"></div><svg class="ic" style="left:1365.5px;top:228px;width:12.5px;height:12.5px" viewBox="0 0 24 24" fill="none" stroke="#047857" stroke-width="2.2" stroke-linecap="round" stroke-linejoin="round"><rect width="20" height="14" x="2" y="5" rx="2"/><line x1="2" x2="22" y1="10" y2="10"/></svg><div class="t" style="left:1382.4px;top:226.0px;height:16px;line-height:16px;font-size:12px;color:#047857;font-weight:400;letter-spacing:-0.09px;-webkit-text-stroke:0.25px #047857;">Payee</div><svg class="ic" style="left:1544px;top:226px;width:16px;height:16px" viewBox="0 0 24 24" fill="none" stroke="#9ca3af" stroke-width="1.9" stroke-linecap="round" stroke-linejoin="round"><path d="M2 12s3-7 10-7 10 7 10 7-3 7-10 7-10-7-10-7Z"/><circle cx="12" cy="12" r="3"/></svg><svg class="ic" style="left:1574px;top:226px;width:16px;height:16px" viewBox="0 0 24 24" fill="none" stroke="#9ca3af" stroke-width="1.9" stroke-linecap="round" stroke-linejoin="round"><path d="M3 12a9 9 0 1 0 9-9 9.75 9.75 0 0 0-6.74 2.74L3 8"/><path d="M3 3v5h5"/></svg><svg class="ic" style="left:1604px;top:226px;width:16px;height:16px" viewBox="0 0 24 24" fill="none" stroke="#9ca3af" stroke-width="1.9" stroke-linecap="round" stroke-linejoin="round"><path d="m16 3 4 4-4 4"/><path d="M20 7H4"/><path d="m8 21-4-4 4-4"/><path d="M4 17h16"/></svg><svg class="ic" style="left:1634px;top:226px;width:16px;height:16px" viewBox="0 0 24 24" fill="none" stroke="#9ca3af" stroke-width="1.9" stroke-linecap="round" stroke-linejoin="round"><path d="M21 15v4a2 2 0 0 1-2 2H5a2 2 0 0 1-2-2v-4"/><polyline points="7 10 12 15 17 10"/><line x1="12" x2="12" y1="15" y2="3"/></svg><svg class="ic" style="left:1664px;top:226px;width:16px;height:16px" viewBox="0 0 24 24" fill="none" stroke="#9ca3af" stroke-width="1.9" stroke-linecap="round" stroke-linejoin="round"><path d="M10 12.5 8 15l2 2.5"/><path d="m14 12.5 2 2.5-2 2.5"/><path d="M14 2v4a2 2 0 0 0 2 2h4"/><path d="M15 2H6a2 2 0 0 0-2 2v16a2 2 0 0 0 2 2h12a2 2 0 0 0 2-2V7z"/></svg><svg class="ic" style="left:1694px;top:226px;width:16px;height:16px" viewBox="0 0 24 24" fill="none" stroke="#9ca3af" stroke-width="1.9" stroke-linecap="round" stroke-linejoin="round"><path d="M3 6h18"/><path d="M19 6v14c0 1-1 2-2 2H7c-1 0-2-1-2-2V6"/><path d="M8 6V4c0-1 1-2 2-2h4c1 0 2 1 2 2v2"/><line x1="10" x2="10" y1="11" y2="17"/><line x1="14" x2="14" y1="11" y2="17"/></svg><div class="b" style="left:0px;top:313px;width:1733px;height:1px;background:#e5e7eb"></div><div class="b" style="left:11.799999999999997px;top:279.25px;width:15.5px;height:15.5px;border:1.4px solid #707070;border-radius:4px;box-sizing:border-box;background:#fff"></div><div class="t" style="left:56px;top:278.0px;height:18px;line-height:18px;font-size:14px;color:#111827;font-weight:400;letter-spacing:0.6px;">24/03/2026</div><div class="t" style="left:171.5px;top:278.0px;height:18px;line-height:18px;font-size:14px;color:#111827;font-weight:400;letter-spacing:0.322px;-webkit-text-stroke:0.2px #111827;">2217970472</div><div class="b" style="left:259.4px;top:275px;width:52.4px;height:24px;background:#f3e8ff;border-radius:8px"></div><div class="t" style="left:265.79999999999995px;top:281.6px;height:12px;line-height:12px;font-size:9.5px;color:#7e22ce;font-weight:700;letter-spacing:0.2px;">PEPPOL</div><div class="b" style="left:449.6px;top:279px;width:49px;height:20px;background:#dbeafe;border-radius:999px"></div><div class="t" style="left:457.79999999999995px;top:280.6px;height:16px;line-height:16px;font-size:12px;color:#1d4ed8;font-weight:400;letter-spacing:0.3px;-webkit-text-stroke:0.25px #1d4ed8;">Achat</div><div class="t" style="left:536.5px;top:278.0px;height:18px;line-height:18px;font-size:14px;color:#1f2937;font-weight:400;letter-spacing:0.09px;">Chauffage Simon SA</div><div class="b" style="left:752.9px;top:288px;width:4.8px;height:1.3px;background:#9ca3af"></div><div class="b" style="left:871.3px;top:285px;width:8.3px;height:8.3px;background:#10b981;border-radius:50%"></div><div class="t" style="left:884px;top:281.0px;height:16px;line-height:16px;font-size:12px;color:#374151;font-weight:400;letter-spacing:-0.29px;">ARDENNE GESTION</div><div class="b" style="left:1055.6px;top:287.5px;width:4.8px;height:1.3px;background:#9ca3af"></div><div class="t" style="right:476px;top:277px;height:20px;line-height:20px;font-size:14px;color:#111827;letter-spacing:0.4px;-webkit-text-stroke:0.2px #111827">3,30 €</div><div class="b" style="left:1358px;top:277px;width:66.3px;height:20px;background:#d1fae5;border-radius:999px"></div><svg class="ic" style="left:1365.5px;top:281px;width:12.5px;height:12.5px" viewBox="0 0 24 24" fill="none" stroke="#047857" stroke-width="2.2" stroke-linecap="round" stroke-linejoin="round"><rect width="20" height="14" x="2" y="5" rx="2"/><line x1="2" x2="22" y1="10" y2="10"/></svg><div class="t" style="left:1382.4px;top:279.0px;height:16px;line-height:16px;font-size:12px;color:#047857;font-weight:400;letter-spacing:-0.09px;-webkit-text-stroke:0.25px #047857;">Payee</div><svg class="ic" style="left:1544px;top:279px;width:16px;height:16px" viewBox="0 0 24 24" fill="none" stroke="#9ca3af" stroke-width="1.9" stroke-linecap="round" stroke-linejoin="round"><path d="M2 12s3-7 10-7 10 7 10 7-3 7-10 7-10-7-10-7Z"/><circle cx="12" cy="12" r="3"/></svg><svg class="ic" style="left:1574px;top:279px;width:16px;height:16px" viewBox="0 0 24 24" fill="none" stroke="#9ca3af" stroke-width="1.9" stroke-linecap="round" stroke-linejoin="round"><path d="M3 12a9 9 0 1 0 9-9 9.75 9.75 0 0 0-6.74 2.74L3 8"/><path d="M3 3v5h5"/></svg><svg class="ic" style="left:1604px;top:279px;width:16px;height:16px" viewBox="0 0 24 24" fill="none" stroke="#9ca3af" stroke-width="1.9" stroke-linecap="round" stroke-linejoin="round"><path d="m16 3 4 4-4 4"/><path d="M20 7H4"/><path d="m8 21-4-4 4-4"/><path d="M4 17h16"/></svg><svg class="ic" style="left:1634px;top:279px;width:16px;height:16px" viewBox="0 0 24 24" fill="none" stroke="#9ca3af" stroke-width="1.9" stroke-linecap="round" stroke-linejoin="round"><path d="M21 15v4a2 2 0 0 1-2 2H5a2 2 0 0 1-2-2v-4"/><polyline points="7 10 12 15 17 10"/><line x1="12" x2="12" y1="15" y2="3"/></svg><svg class="ic" style="left:1664px;top:279px;width:16px;height:16px" viewBox="0 0 24 24" fill="none" stroke="#9ca3af" stroke-width="1.9" stroke-linecap="round" stroke-linejoin="round"><path d="M10 12.5 8 15l2 2.5"/><path d="m14 12.5 2 2.5-2 2.5"/><path d="M14 2v4a2 2 0 0 0 2 2h4"/><path d="M15 2H6a2 2 0 0 0-2 2v16a2 2 0 0 0 2 2h12a2 2 0 0 0 2-2V7z"/></svg><svg class="ic" style="left:1694px;top:279px;width:16px;height:16px" viewBox="0 0 24 24" fill="none" stroke="#9ca3af" stroke-width="1.9" stroke-linecap="round" stroke-linejoin="round"><path d="M3 6h18"/><path d="M19 6v14c0 1-1 2-2 2H7c-1 0-2-1-2-2V6"/><path d="M8 6V4c0-1 1-2 2-2h4c1 0 2 1 2 2v2"/><line x1="10" x2="10" y1="11" y2="17"/><line x1="14" x2="14" y1="11" y2="17"/></svg><div class="b" style="left:0px;top:366px;width:1733px;height:1px;background:#e5e7eb"></div><div class="b" style="left:11.799999999999997px;top:332.25px;width:15.5px;height:15.5px;border:1.4px solid #707070;border-radius:4px;box-sizing:border-box;background:#fff"></div><div class="t" style="left:56px;top:331.0px;height:18px;line-height:18px;font-size:14px;color:#111827;font-weight:400;letter-spacing:0.6px;">24/03/2026</div><div class="t" style="left:171.5px;top:331.0px;height:18px;line-height:18px;font-size:14px;color:#111827;font-weight:400;letter-spacing:0.386px;-webkit-text-stroke:0.2px #111827;">FAC01-2621001384</div><div class="b" style="left:309.8px;top:328px;width:52.4px;height:24px;background:#f3e8ff;border-radius:8px"></div><div class="t" style="left:316.2px;top:334.6px;height:12px;line-height:12px;font-size:9.5px;color:#7e22ce;font-weight:700;letter-spacing:0.2px;">PEPPOL</div><div class="b" style="left:449.6px;top:332px;width:49px;height:20px;background:#dbeafe;border-radius:999px"></div><div class="t" style="left:457.79999999999995px;top:333.6px;height:16px;line-height:16px;font-size:12px;color:#1d4ed8;font-weight:400;letter-spacing:0.3px;-webkit-text-stroke:0.25px #1d4ed8;">Achat</div><div class="t" style="left:536.5px;top:331.0px;height:18px;line-height:18px;font-size:14px;color:#1f2937;font-weight:400;letter-spacing:0.09px;">Jardin Mertens SRL</div><div class="b" style="left:752.9px;top:341px;width:4.8px;height:1.3px;background:#9ca3af"></div><div class="b" style="left:871.3px;top:338px;width:8.3px;height:8.3px;background:#10b981;border-radius:50%"></div><div class="t" style="left:884px;top:334.0px;height:16px;line-height:16px;font-size:12px;color:#374151;font-weight:400;letter-spacing:-0.29px;">ARDENNE GESTION</div><div class="b" style="left:1055.6px;top:340.5px;width:4.8px;height:1.3px;background:#9ca3af"></div><div class="t" style="right:476px;top:330px;height:20px;line-height:20px;font-size:14px;color:#111827;letter-spacing:0.4px;-webkit-text-stroke:0.2px #111827">87,50 €</div><div class="b" style="left:1358px;top:330px;width:66.3px;height:20px;background:#d1fae5;border-radius:999px"></div><svg class="ic" style="left:1365.5px;top:334px;width:12.5px;height:12.5px" viewBox="0 0 24 24" fill="none" stroke="#047857" stroke-width="2.2" stroke-linecap="round" stroke-linejoin="round"><rect width="20" height="14" x="2" y="5" rx="2"/><line x1="2" x2="22" y1="10" y2="10"/></svg><div class="t" style="left:1382.4px;top:332.0px;height:16px;line-height:16px;font-size:12px;color:#047857;font-weight:400;letter-spacing:-0.09px;-webkit-text-stroke:0.25px #047857;">Payee</div><svg class="ic" style="left:1544px;top:332px;width:16px;height:16px" viewBox="0 0 24 24" fill="none" stroke="#9ca3af" stroke-width="1.9" stroke-linecap="round" stroke-linejoin="round"><path d="M2 12s3-7 10-7 10 7 10 7-3 7-10 7-10-7-10-7Z"/><circle cx="12" cy="12" r="3"/></svg><svg class="ic" style="left:1574px;top:332px;width:16px;height:16px" viewBox="0 0 24 24" fill="none" stroke="#9ca3af" stroke-width="1.9" stroke-linecap="round" stroke-linejoin="round"><path d="M3 12a9 9 0 1 0 9-9 9.75 9.75 0 0 0-6.74 2.74L3 8"/><path d="M3 3v5h5"/></svg><svg class="ic" style="left:1604px;top:332px;width:16px;height:16px" viewBox="0 0 24 24" fill="none" stroke="#9ca3af" stroke-width="1.9" stroke-linecap="round" stroke-linejoin="round"><path d="m16 3 4 4-4 4"/><path d="M20 7H4"/><path d="m8 21-4-4 4-4"/><path d="M4 17h16"/></svg><svg class="ic" style="left:1634px;top:332px;width:16px;height:16px" viewBox="0 0 24 24" fill="none" stroke="#9ca3af" stroke-width="1.9" stroke-linecap="round" stroke-linejoin="round"><path d="M21 15v4a2 2 0 0 1-2 2H5a2 2 0 0 1-2-2v-4"/><polyline points="7 10 12 15 17 10"/><line x1="12" x2="12" y1="15" y2="3"/></svg><svg class="ic" style="left:1664px;top:332px;width:16px;height:16px" viewBox="0 0 24 24" fill="none" stroke="#9ca3af" stroke-width="1.9" stroke-linecap="round" stroke-linejoin="round"><path d="M10 12.5 8 15l2 2.5"/><path d="m14 12.5 2 2.5-2 2.5"/><path d="M14 2v4a2 2 0 0 0 2 2h4"/><path d="M15 2H6a2 2 0 0 0-2 2v16a2 2 0 0 0 2 2h12a2 2 0 0 0 2-2V7z"/></svg><svg class="ic" style="left:1694px;top:332px;width:16px;height:16px" viewBox="0 0 24 24" fill="none" stroke="#9ca3af" stroke-width="1.9" stroke-linecap="round" stroke-linejoin="round"><path d="M3 6h18"/><path d="M19 6v14c0 1-1 2-2 2H7c-1 0-2-1-2-2V6"/><path d="M8 6V4c0-1 1-2 2-2h4c1 0 2 1 2 2v2"/><line x1="10" x2="10" y1="11" y2="17"/><line x1="14" x2="14" y1="11" y2="17"/></svg><div class="b" style="left:0px;top:419px;width:1733px;height:1px;background:#e5e7eb"></div><div class="b" style="left:11.799999999999997px;top:385.25px;width:15.5px;height:15.5px;border:1.4px solid #707070;border-radius:4px;box-sizing:border-box;background:#fff"></div><div class="t" style="left:56px;top:384.0px;height:18px;line-height:18px;font-size:14px;color:#111827;font-weight:400;letter-spacing:0.6px;">24/03/2026</div><div class="t" style="left:171.5px;top:384.0px;height:18px;line-height:18px;font-size:14px;color:#111827;font-weight:400;letter-spacing:0.217px;-webkit-text-stroke:0.2px #111827;">FAC01-2621001381</div><div class="b" style="left:307.1px;top:381px;width:52.4px;height:24px;background:#f3e8ff;border-radius:8px"></div><div class="t" style="left:313.5px;top:387.6px;height:12px;line-height:12px;font-size:9.5px;color:#7e22ce;font-weight:700;letter-spacing:0.2px;">PEPPOL</div><div class="b" style="left:449.6px;top:385px;width:49px;height:20px;background:#dbeafe;border-radius:999px"></div><div class="t" style="left:457.79999999999995px;top:386.6px;height:16px;line-height:16px;font-size:12px;color:#1d4ed8;font-weight:400;letter-spacing:0.3px;-webkit-text-stroke:0.25px #1d4ed8;">Achat</div><div class="t" style="left:536.5px;top:384.0px;height:18px;line-height:18px;font-size:14px;color:#1f2937;font-weight:400;letter-spacing:0.09px;">Jardin Mertens SRL</div><div class="b" style="left:752px;top:385.5px;width:80px;height:20px;background:#ec4899;border-radius:999px"></div><div class="b" style="left:760px;top:392.5px;width:6px;height:6px;background:#4b5563;border-radius:50%"></div><div class="t" style="left:772.8px;top:386.9px;height:17px;line-height:17px;font-size:13px;color:#1f2937;font-weight:400;letter-spacing:-0.1px;-webkit-text-stroke:0.3px #1f2937;">Waterloo</div><div class="b" style="left:871.3px;top:391px;width:8.3px;height:8.3px;background:#10b981;border-radius:50%"></div><div class="t" style="left:884px;top:387.0px;height:16px;line-height:16px;font-size:12px;color:#374151;font-weight:400;letter-spacing:-0.29px;">ARDENNE GESTION</div><div class="b" style="left:1055.6px;top:393.5px;width:4.8px;height:1.3px;background:#9ca3af"></div><div class="t" style="right:476px;top:383px;height:20px;line-height:20px;font-size:14px;color:#111827;letter-spacing:0.4px;-webkit-text-stroke:0.2px #111827">80,09 €</div><div class="b" style="left:1358px;top:383px;width:66.3px;height:20px;background:#d1fae5;border-radius:999px"></div><svg class="ic" style="left:1365.5px;top:387px;width:12.5px;height:12.5px" viewBox="0 0 24 24" fill="none" stroke="#047857" stroke-width="2.2" stroke-linecap="round" stroke-linejoin="round"><rect width="20" height="14" x="2" y="5" rx="2"/><line x1="2" x2="22" y1="10" y2="10"/></svg><div class="t" style="left:1382.4px;top:385.0px;height:16px;line-height:16px;font-size:12px;color:#047857;font-weight:400;letter-spacing:-0.09px;-webkit-text-stroke:0.25px #047857;">Payee</div><svg class="ic" style="left:1544px;top:385px;width:16px;height:16px" viewBox="0 0 24 24" fill="none" stroke="#9ca3af" stroke-width="1.9" stroke-linecap="round" stroke-linejoin="round"><path d="M2 12s3-7 10-7 10 7 10 7-3 7-10 7-10-7-10-7Z"/><circle cx="12" cy="12" r="3"/></svg><svg class="ic" style="left:1574px;top:385px;width:16px;height:16px" viewBox="0 0 24 24" fill="none" stroke="#9ca3af" stroke-width="1.9" stroke-linecap="round" stroke-linejoin="round"><path d="M3 12a9 9 0 1 0 9-9 9.75 9.75 0 0 0-6.74 2.74L3 8"/><path d="M3 3v5h5"/></svg><svg class="ic" style="left:1604px;top:385px;width:16px;height:16px" viewBox="0 0 24 24" fill="none" stroke="#9ca3af" stroke-width="1.9" stroke-linecap="round" stroke-linejoin="round"><path d="m16 3 4 4-4 4"/><path d="M20 7H4"/><path d="m8 21-4-4 4-4"/><path d="M4 17h16"/></svg><svg class="ic" style="left:1634px;top:385px;width:16px;height:16px" viewBox="0 0 24 24" fill="none" stroke="#9ca3af" stroke-width="1.9" stroke-linecap="round" stroke-linejoin="round"><path d="M21 15v4a2 2 0 0 1-2 2H5a2 2 0 0 1-2-2v-4"/><polyline points="7 10 12 15 17 10"/><line x1="12" x2="12" y1="15" y2="3"/></svg><svg class="ic" style="left:1664px;top:385px;width:16px;height:16px" viewBox="0 0 24 24" fill="none" stroke="#9ca3af" stroke-width="1.9" stroke-linecap="round" stroke-linejoin="round"><path d="M10 12.5 8 15l2 2.5"/><path d="m14 12.5 2 2.5-2 2.5"/><path d="M14 2v4a2 2 0 0 0 2 2h4"/><path d="M15 2H6a2 2 0 0 0-2 2v16a2 2 0 0 0 2 2h12a2 2 0 0 0 2-2V7z"/></svg><svg class="ic" style="left:1694px;top:385px;width:16px;height:16px" viewBox="0 0 24 24" fill="none" stroke="#9ca3af" stroke-width="1.9" stroke-linecap="round" stroke-linejoin="round"><path d="M3 6h18"/><path d="M19 6v14c0 1-1 2-2 2H7c-1 0-2-1-2-2V6"/><path d="M8 6V4c0-1 1-2 2-2h4c1 0 2 1 2 2v2"/><line x1="10" x2="10" y1="11" y2="17"/><line x1="14" x2="14" y1="11" y2="17"/></svg><div class="b" style="left:0px;top:472px;width:1733px;height:1px;background:#e5e7eb"></div><div class="b" style="left:11.799999999999997px;top:438.25px;width:15.5px;height:15.5px;border:1.4px solid #707070;border-radius:4px;box-sizing:border-box;background:#fff"></div><div class="t" style="left:56px;top:437.0px;height:18px;line-height:18px;font-size:14px;color:#111827;font-weight:400;letter-spacing:0.6px;">24/03/2026</div><div class="t" style="left:171.5px;top:437.0px;height:18px;line-height:18px;font-size:14px;color:#111827;font-weight:400;letter-spacing:0.511px;-webkit-text-stroke:0.2px #111827;">28</div><div class="b" style="left:194.89999999999998px;top:434px;width:52.4px;height:24px;background:#f3e8ff;border-radius:8px"></div><div class="t" style="left:201.29999999999995px;top:440.6px;height:12px;line-height:12px;font-size:9.5px;color:#7e22ce;font-weight:700;letter-spacing:0.2px;">PEPPOL</div><div class="b" style="left:449.6px;top:438px;width:49px;height:20px;background:#dbeafe;border-radius:999px"></div><div class="t" style="left:457.79999999999995px;top:439.6px;height:16px;line-height:16px;font-size:12px;color:#1d4ed8;font-weight:400;letter-spacing:0.3px;-webkit-text-stroke:0.25px #1d4ed8;">Achat</div><div class="t" style="left:536.5px;top:437.0px;height:18px;line-height:18px;font-size:14px;color:#1f2937;font-weight:400;letter-spacing:0.09px;">Sanitaires Collin SRL</div><div class="b" style="left:752px;top:438.5px;width:80px;height:20px;background:#ec4899;border-radius:999px"></div><div class="b" style="left:760px;top:445.5px;width:6px;height:6px;background:#4b5563;border-radius:50%"></div><div class="t" style="left:772.8px;top:439.9px;height:17px;line-height:17px;font-size:13px;color:#1f2937;font-weight:400;letter-spacing:-0.1px;-webkit-text-stroke:0.3px #1f2937;">Waterloo</div><div class="b" style="left:871.3px;top:444px;width:8.3px;height:8.3px;background:#10b981;border-radius:50%"></div><div class="t" style="left:884px;top:440.0px;height:16px;line-height:16px;font-size:12px;color:#374151;font-weight:400;letter-spacing:-0.29px;">ARDENNE GESTION</div><div class="b" style="left:1055.6px;top:446.5px;width:4.8px;height:1.3px;background:#9ca3af"></div><div class="t" style="right:476px;top:436px;height:20px;line-height:20px;font-size:14px;color:#111827;letter-spacing:0.4px;-webkit-text-stroke:0.2px #111827">4<span style="display:inline-block;width:2.6px"></span>729,23 €</div><div class="b" style="left:1358px;top:436px;width:66.3px;height:20px;background:#d1fae5;border-radius:999px"></div><svg class="ic" style="left:1365.5px;top:440px;width:12.5px;height:12.5px" viewBox="0 0 24 24" fill="none" stroke="#047857" stroke-width="2.2" stroke-linecap="round" stroke-linejoin="round"><rect width="20" height="14" x="2" y="5" rx="2"/><line x1="2" x2="22" y1="10" y2="10"/></svg><div class="t" style="left:1382.4px;top:438.0px;height:16px;line-height:16px;font-size:12px;color:#047857;font-weight:400;letter-spacing:-0.09px;-webkit-text-stroke:0.25px #047857;">Payee</div><svg class="ic" style="left:1544px;top:438px;width:16px;height:16px" viewBox="0 0 24 24" fill="none" stroke="#9ca3af" stroke-width="1.9" stroke-linecap="round" stroke-linejoin="round"><path d="M2 12s3-7 10-7 10 7 10 7-3 7-10 7-10-7-10-7Z"/><circle cx="12" cy="12" r="3"/></svg><svg class="ic" style="left:1574px;top:438px;width:16px;height:16px" viewBox="0 0 24 24" fill="none" stroke="#9ca3af" stroke-width="1.9" stroke-linecap="round" stroke-linejoin="round"><path d="M3 12a9 9 0 1 0 9-9 9.75 9.75 0 0 0-6.74 2.74L3 8"/><path d="M3 3v5h5"/></svg><svg class="ic" style="left:1604px;top:438px;width:16px;height:16px" viewBox="0 0 24 24" fill="none" stroke="#9ca3af" stroke-width="1.9" stroke-linecap="round" stroke-linejoin="round"><path d="m16 3 4 4-4 4"/><path d="M20 7H4"/><path d="m8 21-4-4 4-4"/><path d="M4 17h16"/></svg><svg class="ic" style="left:1634px;top:438px;width:16px;height:16px" viewBox="0 0 24 24" fill="none" stroke="#9ca3af" stroke-width="1.9" stroke-linecap="round" stroke-linejoin="round"><path d="M21 15v4a2 2 0 0 1-2 2H5a2 2 0 0 1-2-2v-4"/><polyline points="7 10 12 15 17 10"/><line x1="12" x2="12" y1="15" y2="3"/></svg><svg class="ic" style="left:1664px;top:438px;width:16px;height:16px" viewBox="0 0 24 24" fill="none" stroke="#9ca3af" stroke-width="1.9" stroke-linecap="round" stroke-linejoin="round"><path d="M10 12.5 8 15l2 2.5"/><path d="m14 12.5 2 2.5-2 2.5"/><path d="M14 2v4a2 2 0 0 0 2 2h4"/><path d="M15 2H6a2 2 0 0 0-2 2v16a2 2 0 0 0 2 2h12a2 2 0 0 0 2-2V7z"/></svg><svg class="ic" style="left:1694px;top:438px;width:16px;height:16px" viewBox="0 0 24 24" fill="none" stroke="#9ca3af" stroke-width="1.9" stroke-linecap="round" stroke-linejoin="round"><path d="M3 6h18"/><path d="M19 6v14c0 1-1 2-2 2H7c-1 0-2-1-2-2V6"/><path d="M8 6V4c0-1 1-2 2-2h4c1 0 2 1 2 2v2"/><line x1="10" x2="10" y1="11" y2="17"/><line x1="14" x2="14" y1="11" y2="17"/></svg><div class="b" style="left:0px;top:525px;width:1733px;height:1px;background:#e5e7eb"></div><div class="b" style="left:11.799999999999997px;top:491.25px;width:15.5px;height:15.5px;border:1.4px solid #707070;border-radius:4px;box-sizing:border-box;background:#fff"></div><div class="t" style="left:56px;top:490.0px;height:18px;line-height:18px;font-size:14px;color:#111827;font-weight:400;letter-spacing:0.6px;">23/03/2026</div><div class="t" style="left:171.5px;top:490.0px;height:18px;line-height:18px;font-size:14px;color:#111827;font-weight:400;letter-spacing:0.272px;-webkit-text-stroke:0.2px #111827;">2217962371</div><div class="b" style="left:258.9px;top:487px;width:52.4px;height:24px;background:#f3e8ff;border-radius:8px"></div><div class="t" style="left:265.29999999999995px;top:493.6px;height:12px;line-height:12px;font-size:9.5px;color:#7e22ce;font-weight:700;letter-spacing:0.2px;">PEPPOL</div><div class="b" style="left:449.6px;top:491px;width:49px;height:20px;background:#dbeafe;border-radius:999px"></div><div class="t" style="left:457.79999999999995px;top:492.6px;height:16px;line-height:16px;font-size:12px;color:#1d4ed8;font-weight:400;letter-spacing:0.3px;-webkit-text-stroke:0.25px #1d4ed8;">Achat</div><div class="t" style="left:536.5px;top:490.0px;height:18px;line-height:18px;font-size:14px;color:#1f2937;font-weight:400;letter-spacing:0.09px;">Chauffage Simon SA</div><div class="b" style="left:752.9px;top:500px;width:4.8px;height:1.3px;background:#9ca3af"></div><div class="b" style="left:871.3px;top:497px;width:8.3px;height:8.3px;background:#10b981;border-radius:50%"></div><div class="t" style="left:884px;top:493.0px;height:16px;line-height:16px;font-size:12px;color:#374151;font-weight:400;letter-spacing:-0.29px;">ARDENNE GESTION</div><div class="b" style="left:1055.6px;top:499.5px;width:4.8px;height:1.3px;background:#9ca3af"></div><div class="t" style="right:476px;top:489px;height:20px;line-height:20px;font-size:14px;color:#111827;letter-spacing:0.4px;-webkit-text-stroke:0.2px #111827">33,70 €</div><div class="b" style="left:1358px;top:489px;width:66.3px;height:20px;background:#d1fae5;border-radius:999px"></div><svg class="ic" style="left:1365.5px;top:493px;width:12.5px;height:12.5px" viewBox="0 0 24 24" fill="none" stroke="#047857" stroke-width="2.2" stroke-linecap="round" stroke-linejoin="round"><rect width="20" height="14" x="2" y="5" rx="2"/><line x1="2" x2="22" y1="10" y2="10"/></svg><div class="t" style="left:1382.4px;top:491.0px;height:16px;line-height:16px;font-size:12px;color:#047857;font-weight:400;letter-spacing:-0.09px;-webkit-text-stroke:0.25px #047857;">Payee</div><svg class="ic" style="left:1544px;top:491px;width:16px;height:16px" viewBox="0 0 24 24" fill="none" stroke="#9ca3af" stroke-width="1.9" stroke-linecap="round" stroke-linejoin="round"><path d="M2 12s3-7 10-7 10 7 10 7-3 7-10 7-10-7-10-7Z"/><circle cx="12" cy="12" r="3"/></svg><svg class="ic" style="left:1574px;top:491px;width:16px;height:16px" viewBox="0 0 24 24" fill="none" stroke="#9ca3af" stroke-width="1.9" stroke-linecap="round" stroke-linejoin="round"><path d="M3 12a9 9 0 1 0 9-9 9.75 9.75 0 0 0-6.74 2.74L3 8"/><path d="M3 3v5h5"/></svg><svg class="ic" style="left:1604px;top:491px;width:16px;height:16px" viewBox="0 0 24 24" fill="none" stroke="#9ca3af" stroke-width="1.9" stroke-linecap="round" stroke-linejoin="round"><path d="m16 3 4 4-4 4"/><path d="M20 7H4"/><path d="m8 21-4-4 4-4"/><path d="M4 17h16"/></svg><svg class="ic" style="left:1634px;top:491px;width:16px;height:16px" viewBox="0 0 24 24" fill="none" stroke="#9ca3af" stroke-width="1.9" stroke-linecap="round" stroke-linejoin="round"><path d="M21 15v4a2 2 0 0 1-2 2H5a2 2 0 0 1-2-2v-4"/><polyline points="7 10 12 15 17 10"/><line x1="12" x2="12" y1="15" y2="3"/></svg><svg class="ic" style="left:1664px;top:491px;width:16px;height:16px" viewBox="0 0 24 24" fill="none" stroke="#9ca3af" stroke-width="1.9" stroke-linecap="round" stroke-linejoin="round"><path d="M10 12.5 8 15l2 2.5"/><path d="m14 12.5 2 2.5-2 2.5"/><path d="M14 2v4a2 2 0 0 0 2 2h4"/><path d="M15 2H6a2 2 0 0 0-2 2v16a2 2 0 0 0 2 2h12a2 2 0 0 0 2-2V7z"/></svg><svg class="ic" style="left:1694px;top:491px;width:16px;height:16px" viewBox="0 0 24 24" fill="none" stroke="#9ca3af" stroke-width="1.9" stroke-linecap="round" stroke-linejoin="round"><path d="M3 6h18"/><path d="M19 6v14c0 1-1 2-2 2H7c-1 0-2-1-2-2V6"/><path d="M8 6V4c0-1 1-2 2-2h4c1 0 2 1 2 2v2"/><line x1="10" x2="10" y1="11" y2="17"/><line x1="14" x2="14" y1="11" y2="17"/></svg><div class="b" style="left:0px;top:578px;width:1733px;height:1px;background:#e5e7eb"></div><div class="b" style="left:11.799999999999997px;top:544.25px;width:15.5px;height:15.5px;border:1.4px solid #707070;border-radius:4px;box-sizing:border-box;background:#fff"></div><div class="t" style="left:56px;top:543.0px;height:18px;line-height:18px;font-size:14px;color:#111827;font-weight:400;letter-spacing:0.6px;">23/03/2026</div><div class="t" style="left:171.5px;top:543.0px;height:18px;line-height:18px;font-size:14px;color:#111827;font-weight:400;letter-spacing:0.482px;-webkit-text-stroke:0.2px #111827;">2217962373</div><div class="b" style="left:261.0px;top:540px;width:52.4px;height:24px;background:#f3e8ff;border-radius:8px"></div><div class="t" style="left:267.4px;top:546.6px;height:12px;line-height:12px;font-size:9.5px;color:#7e22ce;font-weight:700;letter-spacing:0.2px;">PEPPOL</div><div class="b" style="left:449.6px;top:544px;width:49px;height:20px;background:#dbeafe;border-radius:999px"></div><div class="t" style="left:457.79999999999995px;top:545.6px;height:16px;line-height:16px;font-size:12px;color:#1d4ed8;font-weight:400;letter-spacing:0.3px;-webkit-text-stroke:0.25px #1d4ed8;">Achat</div><div class="t" style="left:536.5px;top:543.0px;height:18px;line-height:18px;font-size:14px;color:#1f2937;font-weight:400;letter-spacing:0.09px;">Chauffage Simon SA</div><div class="b" style="left:752.9px;top:553px;width:4.8px;height:1.3px;background:#9ca3af"></div><div class="b" style="left:871.3px;top:550px;width:8.3px;height:8.3px;background:#10b981;border-radius:50%"></div><div class="t" style="left:884px;top:546.0px;height:16px;line-height:16px;font-size:12px;color:#374151;font-weight:400;letter-spacing:-0.29px;">ARDENNE GESTION</div><div class="b" style="left:1055.6px;top:552.5px;width:4.8px;height:1.3px;background:#9ca3af"></div><div class="t" style="right:476px;top:542px;height:20px;line-height:20px;font-size:14px;color:#111827;letter-spacing:0.4px;-webkit-text-stroke:0.2px #111827">19,40 €</div><div class="b" style="left:1358px;top:542px;width:66.3px;height:20px;background:#d1fae5;border-radius:999px"></div><svg class="ic" style="left:1365.5px;top:546px;width:12.5px;height:12.5px" viewBox="0 0 24 24" fill="none" stroke="#047857" stroke-width="2.2" stroke-linecap="round" stroke-linejoin="round"><rect width="20" height="14" x="2" y="5" rx="2"/><line x1="2" x2="22" y1="10" y2="10"/></svg><div class="t" style="left:1382.4px;top:544.0px;height:16px;line-height:16px;font-size:12px;color:#047857;font-weight:400;letter-spacing:-0.09px;-webkit-text-stroke:0.25px #047857;">Payee</div><svg class="ic" style="left:1544px;top:544px;width:16px;height:16px" viewBox="0 0 24 24" fill="none" stroke="#9ca3af" stroke-width="1.9" stroke-linecap="round" stroke-linejoin="round"><path d="M2 12s3-7 10-7 10 7 10 7-3 7-10 7-10-7-10-7Z"/><circle cx="12" cy="12" r="3"/></svg><svg class="ic" style="left:1574px;top:544px;width:16px;height:16px" viewBox="0 0 24 24" fill="none" stroke="#9ca3af" stroke-width="1.9" stroke-linecap="round" stroke-linejoin="round"><path d="M3 12a9 9 0 1 0 9-9 9.75 9.75 0 0 0-6.74 2.74L3 8"/><path d="M3 3v5h5"/></svg><svg class="ic" style="left:1604px;top:544px;width:16px;height:16px" viewBox="0 0 24 24" fill="none" stroke="#9ca3af" stroke-width="1.9" stroke-linecap="round" stroke-linejoin="round"><path d="m16 3 4 4-4 4"/><path d="M20 7H4"/><path d="m8 21-4-4 4-4"/><path d="M4 17h16"/></svg><svg class="ic" style="left:1634px;top:544px;width:16px;height:16px" viewBox="0 0 24 24" fill="none" stroke="#9ca3af" stroke-width="1.9" stroke-linecap="round" stroke-linejoin="round"><path d="M21 15v4a2 2 0 0 1-2 2H5a2 2 0 0 1-2-2v-4"/><polyline points="7 10 12 15 17 10"/><line x1="12" x2="12" y1="15" y2="3"/></svg><svg class="ic" style="left:1664px;top:544px;width:16px;height:16px" viewBox="0 0 24 24" fill="none" stroke="#9ca3af" stroke-width="1.9" stroke-linecap="round" stroke-linejoin="round"><path d="M10 12.5 8 15l2 2.5"/><path d="m14 12.5 2 2.5-2 2.5"/><path d="M14 2v4a2 2 0 0 0 2 2h4"/><path d="M15 2H6a2 2 0 0 0-2 2v16a2 2 0 0 0 2 2h12a2 2 0 0 0 2-2V7z"/></svg><svg class="ic" style="left:1694px;top:544px;width:16px;height:16px" viewBox="0 0 24 24" fill="none" stroke="#9ca3af" stroke-width="1.9" stroke-linecap="round" stroke-linejoin="round"><path d="M3 6h18"/><path d="M19 6v14c0 1-1 2-2 2H7c-1 0-2-1-2-2V6"/><path d="M8 6V4c0-1 1-2 2-2h4c1 0 2 1 2 2v2"/><line x1="10" x2="10" y1="11" y2="17"/><line x1="14" x2="14" y1="11" y2="17"/></svg><div class="b" style="left:0px;top:631px;width:1733px;height:1px;background:#e5e7eb"></div><div class="b" style="left:11.799999999999997px;top:597.25px;width:15.5px;height:15.5px;border:1.4px solid #707070;border-radius:4px;box-sizing:border-box;background:#fff"></div><div class="t" style="left:56px;top:596.0px;height:18px;line-height:18px;font-size:14px;color:#111827;font-weight:400;letter-spacing:0.6px;">23/03/2026</div><div class="t" style="left:171.5px;top:596.0px;height:18px;line-height:18px;font-size:14px;color:#111827;font-weight:400;letter-spacing:0.822px;-webkit-text-stroke:0.2px #111827;">9154906855</div><div class="b" style="left:264.4px;top:593px;width:52.4px;height:24px;background:#f3e8ff;border-radius:8px"></div><div class="t" style="left:270.79999999999995px;top:599.6px;height:12px;line-height:12px;font-size:9.5px;color:#7e22ce;font-weight:700;letter-spacing:0.2px;">PEPPOL</div><div class="b" style="left:449.6px;top:597px;width:49px;height:20px;background:#dbeafe;border-radius:999px"></div><div class="t" style="left:457.79999999999995px;top:598.6px;height:16px;line-height:16px;font-size:12px;color:#1d4ed8;font-weight:400;letter-spacing:0.3px;-webkit-text-stroke:0.25px #1d4ed8;">Achat</div><div class="t" style="left:536.5px;top:596.0px;height:18px;line-height:18px;font-size:14px;color:#1f2937;font-weight:400;letter-spacing:0.09px;">Ameublement Liège SPRL</div><div class="b" style="left:752.9px;top:606px;width:4.8px;height:1.3px;background:#9ca3af"></div><div class="b" style="left:871.3px;top:603px;width:8.3px;height:8.3px;background:#10b981;border-radius:50%"></div><div class="t" style="left:884px;top:599.0px;height:16px;line-height:16px;font-size:12px;color:#374151;font-weight:400;letter-spacing:-0.29px;">ARDENNE GESTION</div><div class="b" style="left:1055.6px;top:605.5px;width:4.8px;height:1.3px;background:#9ca3af"></div><div class="t" style="right:476px;top:595px;height:20px;line-height:20px;font-size:14px;color:#111827;letter-spacing:0.4px;-webkit-text-stroke:0.2px #111827">41,67 €</div><div class="b" style="left:1358px;top:595px;width:66.3px;height:20px;background:#d1fae5;border-radius:999px"></div><svg class="ic" style="left:1365.5px;top:599px;width:12.5px;height:12.5px" viewBox="0 0 24 24" fill="none" stroke="#047857" stroke-width="2.2" stroke-linecap="round" stroke-linejoin="round"><rect width="20" height="14" x="2" y="5" rx="2"/><line x1="2" x2="22" y1="10" y2="10"/></svg><div class="t" style="left:1382.4px;top:597.0px;height:16px;line-height:16px;font-size:12px;color:#047857;font-weight:400;letter-spacing:-0.09px;-webkit-text-stroke:0.25px #047857;">Payee</div><svg class="ic" style="left:1544px;top:597px;width:16px;height:16px" viewBox="0 0 24 24" fill="none" stroke="#9ca3af" stroke-width="1.9" stroke-linecap="round" stroke-linejoin="round"><path d="M2 12s3-7 10-7 10 7 10 7-3 7-10 7-10-7-10-7Z"/><circle cx="12" cy="12" r="3"/></svg><svg class="ic" style="left:1574px;top:597px;width:16px;height:16px" viewBox="0 0 24 24" fill="none" stroke="#9ca3af" stroke-width="1.9" stroke-linecap="round" stroke-linejoin="round"><path d="M3 12a9 9 0 1 0 9-9 9.75 9.75 0 0 0-6.74 2.74L3 8"/><path d="M3 3v5h5"/></svg><svg class="ic" style="left:1604px;top:597px;width:16px;height:16px" viewBox="0 0 24 24" fill="none" stroke="#9ca3af" stroke-width="1.9" stroke-linecap="round" stroke-linejoin="round"><path d="m16 3 4 4-4 4"/><path d="M20 7H4"/><path d="m8 21-4-4 4-4"/><path d="M4 17h16"/></svg><svg class="ic" style="left:1634px;top:597px;width:16px;height:16px" viewBox="0 0 24 24" fill="none" stroke="#9ca3af" stroke-width="1.9" stroke-linecap="round" stroke-linejoin="round"><path d="M21 15v4a2 2 0 0 1-2 2H5a2 2 0 0 1-2-2v-4"/><polyline points="7 10 12 15 17 10"/><line x1="12" x2="12" y1="15" y2="3"/></svg><svg class="ic" style="left:1664px;top:597px;width:16px;height:16px" viewBox="0 0 24 24" fill="none" stroke="#9ca3af" stroke-width="1.9" stroke-linecap="round" stroke-linejoin="round"><path d="M10 12.5 8 15l2 2.5"/><path d="m14 12.5 2 2.5-2 2.5"/><path d="M14 2v4a2 2 0 0 0 2 2h4"/><path d="M15 2H6a2 2 0 0 0-2 2v16a2 2 0 0 0 2 2h12a2 2 0 0 0 2-2V7z"/></svg><svg class="ic" style="left:1694px;top:597px;width:16px;height:16px" viewBox="0 0 24 24" fill="none" stroke="#9ca3af" stroke-width="1.9" stroke-linecap="round" stroke-linejoin="round"><path d="M3 6h18"/><path d="M19 6v14c0 1-1 2-2 2H7c-1 0-2-1-2-2V6"/><path d="M8 6V4c0-1 1-2 2-2h4c1 0 2 1 2 2v2"/><line x1="10" x2="10" y1="11" y2="17"/><line x1="14" x2="14" y1="11" y2="17"/></svg><div class="b" style="left:0px;top:684px;width:1733px;height:1px;background:#e5e7eb"></div><div class="b" style="left:11.799999999999997px;top:650.25px;width:15.5px;height:15.5px;border:1.4px solid #707070;border-radius:4px;box-sizing:border-box;background:#fff"></div><div class="t" style="left:56px;top:649.0px;height:18px;line-height:18px;font-size:14px;color:#111827;font-weight:400;letter-spacing:0.6px;">22/03/2026</div><div class="t" style="left:171.5px;top:649.0px;height:18px;line-height:18px;font-size:14px;color:#111827;font-weight:400;letter-spacing:0.902px;-webkit-text-stroke:0.2px #111827;">042600575</div><div class="b" style="left:256.5px;top:646px;width:52.4px;height:24px;background:#f3e8ff;border-radius:8px"></div><div class="t" style="left:262.9px;top:652.6px;height:12px;line-height:12px;font-size:9.5px;color:#7e22ce;font-weight:700;letter-spacing:0.2px;">PEPPOL</div><div class="b" style="left:449.6px;top:650px;width:49px;height:20px;background:#dbeafe;border-radius:999px"></div><div class="t" style="left:457.79999999999995px;top:651.6px;height:16px;line-height:16px;font-size:12px;color:#1d4ed8;font-weight:400;letter-spacing:0.3px;-webkit-text-stroke:0.25px #1d4ed8;">Achat</div><div class="t" style="left:536.5px;top:649.0px;height:18px;line-height:18px;font-size:14px;color:#1f2937;font-weight:400;letter-spacing:0.09px;">Sécurité Janssen SA</div><div class="b" style="left:752.9px;top:659px;width:4.8px;height:1.3px;background:#9ca3af"></div><div class="b" style="left:871.3px;top:656px;width:8.3px;height:8.3px;background:#10b981;border-radius:50%"></div><div class="t" style="left:884px;top:652.0px;height:16px;line-height:16px;font-size:12px;color:#374151;font-weight:400;letter-spacing:-0.29px;">ARDENNE GESTION</div><div class="b" style="left:1055.6px;top:658.5px;width:4.8px;height:1.3px;background:#9ca3af"></div><div class="t" style="right:476px;top:648px;height:20px;line-height:20px;font-size:14px;color:#111827;letter-spacing:0.4px;-webkit-text-stroke:0.2px #111827">109,50 €</div><div class="b" style="left:1358px;top:648px;width:66.3px;height:20px;background:#d1fae5;border-radius:999px"></div><svg class="ic" style="left:1365.5px;top:652px;width:12.5px;height:12.5px" viewBox="0 0 24 24" fill="none" stroke="#047857" stroke-width="2.2" stroke-linecap="round" stroke-linejoin="round"><rect width="20" height="14" x="2" y="5" rx="2"/><line x1="2" x2="22" y1="10" y2="10"/></svg><div class="t" style="left:1382.4px;top:650.0px;height:16px;line-height:16px;font-size:12px;color:#047857;font-weight:400;letter-spacing:-0.09px;-webkit-text-stroke:0.25px #047857;">Payee</div><svg class="ic" style="left:1544px;top:650px;width:16px;height:16px" viewBox="0 0 24 24" fill="none" stroke="#9ca3af" stroke-width="1.9" stroke-linecap="round" stroke-linejoin="round"><path d="M2 12s3-7 10-7 10 7 10 7-3 7-10 7-10-7-10-7Z"/><circle cx="12" cy="12" r="3"/></svg><svg class="ic" style="left:1574px;top:650px;width:16px;height:16px" viewBox="0 0 24 24" fill="none" stroke="#9ca3af" stroke-width="1.9" stroke-linecap="round" stroke-linejoin="round"><path d="M3 12a9 9 0 1 0 9-9 9.75 9.75 0 0 0-6.74 2.74L3 8"/><path d="M3 3v5h5"/></svg><svg class="ic" style="left:1604px;top:650px;width:16px;height:16px" viewBox="0 0 24 24" fill="none" stroke="#9ca3af" stroke-width="1.9" stroke-linecap="round" stroke-linejoin="round"><path d="m16 3 4 4-4 4"/><path d="M20 7H4"/><path d="m8 21-4-4 4-4"/><path d="M4 17h16"/></svg><svg class="ic" style="left:1634px;top:650px;width:16px;height:16px" viewBox="0 0 24 24" fill="none" stroke="#9ca3af" stroke-width="1.9" stroke-linecap="round" stroke-linejoin="round"><path d="M21 15v4a2 2 0 0 1-2 2H5a2 2 0 0 1-2-2v-4"/><polyline points="7 10 12 15 17 10"/><line x1="12" x2="12" y1="15" y2="3"/></svg><svg class="ic" style="left:1664px;top:650px;width:16px;height:16px" viewBox="0 0 24 24" fill="none" stroke="#9ca3af" stroke-width="1.9" stroke-linecap="round" stroke-linejoin="round"><path d="M10 12.5 8 15l2 2.5"/><path d="m14 12.5 2 2.5-2 2.5"/><path d="M14 2v4a2 2 0 0 0 2 2h4"/><path d="M15 2H6a2 2 0 0 0-2 2v16a2 2 0 0 0 2 2h12a2 2 0 0 0 2-2V7z"/></svg><svg class="ic" style="left:1694px;top:650px;width:16px;height:16px" viewBox="0 0 24 24" fill="none" stroke="#9ca3af" stroke-width="1.9" stroke-linecap="round" stroke-linejoin="round"><path d="M3 6h18"/><path d="M19 6v14c0 1-1 2-2 2H7c-1 0-2-1-2-2V6"/><path d="M8 6V4c0-1 1-2 2-2h4c1 0 2 1 2 2v2"/><line x1="10" x2="10" y1="11" y2="17"/><line x1="14" x2="14" y1="11" y2="17"/></svg><div class="b" style="left:0px;top:737px;width:1733px;height:1px;background:#e5e7eb"></div><div class="b" style="left:11.799999999999997px;top:703.25px;width:15.5px;height:15.5px;border:1.4px solid #707070;border-radius:4px;box-sizing:border-box;background:#fff"></div><div class="t" style="left:56px;top:702.0px;height:18px;line-height:18px;font-size:14px;color:#111827;font-weight:400;letter-spacing:0.6px;">22/03/2026</div><div class="t" style="left:171.5px;top:702.0px;height:18px;line-height:18px;font-size:14px;color:#111827;font-weight:400;letter-spacing:0.463px;-webkit-text-stroke:0.2px #111827;">B0037</div><div class="b" style="left:221.10000000000002px;top:699px;width:52.4px;height:24px;background:#f3e8ff;border-radius:8px"></div><div class="t" style="left:227.5px;top:705.5999999999999px;height:12px;line-height:12px;font-size:9.5px;color:#7e22ce;font-weight:700;letter-spacing:0.2px;">PEPPOL</div><div class="b" style="left:449.6px;top:703px;width:49px;height:20px;background:#dbeafe;border-radius:999px"></div><div class="t" style="left:457.79999999999995px;top:704.5999999999999px;height:16px;line-height:16px;font-size:12px;color:#1d4ed8;font-weight:400;letter-spacing:0.3px;-webkit-text-stroke:0.25px #1d4ed8;">Achat</div><div class="t" style="left:536.5px;top:702.0px;height:18px;line-height:18px;font-size:14px;color:#1f2937;font-weight:400;letter-spacing:0.09px;">Outillage Pro SA</div><div class="b" style="left:752.9px;top:712px;width:4.8px;height:1.3px;background:#9ca3af"></div><div class="b" style="left:871.3px;top:709px;width:8.3px;height:8.3px;background:#10b981;border-radius:50%"></div><div class="t" style="left:884px;top:705.0px;height:16px;line-height:16px;font-size:12px;color:#374151;font-weight:400;letter-spacing:-0.29px;">ARDENNE GESTION</div><div class="b" style="left:1055.6px;top:711.5px;width:4.8px;height:1.3px;background:#9ca3af"></div><div class="t" style="right:476px;top:701px;height:20px;line-height:20px;font-size:14px;color:#111827;letter-spacing:0.4px;-webkit-text-stroke:0.2px #111827">470,00 €</div><div class="b" style="left:1358px;top:701px;width:66.3px;height:20px;background:#d1fae5;border-radius:999px"></div><svg class="ic" style="left:1365.5px;top:705px;width:12.5px;height:12.5px" viewBox="0 0 24 24" fill="none" stroke="#047857" stroke-width="2.2" stroke-linecap="round" stroke-linejoin="round"><rect width="20" height="14" x="2" y="5" rx="2"/><line x1="2" x2="22" y1="10" y2="10"/></svg><div class="t" style="left:1382.4px;top:703.0px;height:16px;line-height:16px;font-size:12px;color:#047857;font-weight:400;letter-spacing:-0.09px;-webkit-text-stroke:0.25px #047857;">Payee</div><svg class="ic" style="left:1544px;top:703px;width:16px;height:16px" viewBox="0 0 24 24" fill="none" stroke="#9ca3af" stroke-width="1.9" stroke-linecap="round" stroke-linejoin="round"><path d="M2 12s3-7 10-7 10 7 10 7-3 7-10 7-10-7-10-7Z"/><circle cx="12" cy="12" r="3"/></svg><svg class="ic" style="left:1574px;top:703px;width:16px;height:16px" viewBox="0 0 24 24" fill="none" stroke="#9ca3af" stroke-width="1.9" stroke-linecap="round" stroke-linejoin="round"><path d="M3 12a9 9 0 1 0 9-9 9.75 9.75 0 0 0-6.74 2.74L3 8"/><path d="M3 3v5h5"/></svg><svg class="ic" style="left:1604px;top:703px;width:16px;height:16px" viewBox="0 0 24 24" fill="none" stroke="#9ca3af" stroke-width="1.9" stroke-linecap="round" stroke-linejoin="round"><path d="m16 3 4 4-4 4"/><path d="M20 7H4"/><path d="m8 21-4-4 4-4"/><path d="M4 17h16"/></svg><svg class="ic" style="left:1634px;top:703px;width:16px;height:16px" viewBox="0 0 24 24" fill="none" stroke="#9ca3af" stroke-width="1.9" stroke-linecap="round" stroke-linejoin="round"><path d="M21 15v4a2 2 0 0 1-2 2H5a2 2 0 0 1-2-2v-4"/><polyline points="7 10 12 15 17 10"/><line x1="12" x2="12" y1="15" y2="3"/></svg><svg class="ic" style="left:1664px;top:703px;width:16px;height:16px" viewBox="0 0 24 24" fill="none" stroke="#9ca3af" stroke-width="1.9" stroke-linecap="round" stroke-linejoin="round"><path d="M10 12.5 8 15l2 2.5"/><path d="m14 12.5 2 2.5-2 2.5"/><path d="M14 2v4a2 2 0 0 0 2 2h4"/><path d="M15 2H6a2 2 0 0 0-2 2v16a2 2 0 0 0 2 2h12a2 2 0 0 0 2-2V7z"/></svg><svg class="ic" style="left:1694px;top:703px;width:16px;height:16px" viewBox="0 0 24 24" fill="none" stroke="#9ca3af" stroke-width="1.9" stroke-linecap="round" stroke-linejoin="round"><path d="M3 6h18"/><path d="M19 6v14c0 1-1 2-2 2H7c-1 0-2-1-2-2V6"/><path d="M8 6V4c0-1 1-2 2-2h4c1 0 2 1 2 2v2"/><line x1="10" x2="10" y1="11" y2="17"/><line x1="14" x2="14" y1="11" y2="17"/></svg><div class="b" style="left:0px;top:790px;width:1733px;height:1px;background:#e5e7eb"></div><div class="b" style="left:11.799999999999997px;top:756.25px;width:15.5px;height:15.5px;border:1.4px solid #707070;border-radius:4px;box-sizing:border-box;background:#fff"></div><div class="t" style="left:56px;top:755.0px;height:18px;line-height:18px;font-size:14px;color:#111827;font-weight:400;letter-spacing:0.6px;">2<span style="margin-left:-1.2px;letter-spacing:-0.7px">1</span>/03/2026</div><div class="t" style="left:171.5px;top:755.0px;height:18px;line-height:18px;font-size:14px;color:#111827;font-weight:400;letter-spacing:0.834px;-webkit-text-stroke:0.2px #111827;">IMM-AVO-2026-0003</div><div class="b" style="left:449.6px;top:756px;width:44.3px;height:20px;background:#fef3c7;border-radius:999px"></div><div class="t" style="left:457.5px;top:757.5999999999999px;height:16px;line-height:16px;font-size:12px;color:#b45309;font-weight:400;letter-spacing:0.1px;-webkit-text-stroke:0.25px #b45309;">Avoir</div><div class="t" style="left:536.5px;top:755.0px;height:18px;line-height:18px;font-size:14px;color:#1f2937;font-weight:400;letter-spacing:0.09px;">Ventilation André SA</div><div class="b" style="left:752.9px;top:765px;width:4.8px;height:1.3px;background:#9ca3af"></div><div class="b" style="left:871.3px;top:762px;width:8.3px;height:8.3px;background:#10b981;border-radius:50%"></div><div class="t" style="left:884px;top:758.0px;height:16px;line-height:16px;font-size:12px;color:#374151;font-weight:400;letter-spacing:-0.29px;">ARDENNE GESTION</div><div class="b" style="left:1055.6px;top:764.5px;width:4.8px;height:1.3px;background:#9ca3af"></div><div class="t" style="right:476px;top:754px;height:20px;line-height:20px;font-size:14px;color:#dc2626;letter-spacing:0.4px;-webkit-text-stroke:0.2px #dc2626">-418,94 €</div><div class="b" style="left:1296.4px;top:754px;width:66.6px;height:20px;background:#d1fae5;border-radius:999px"></div><svg class="ic" style="left:1304px;top:758px;width:12.5px;height:12.5px" viewBox="0 0 24 24" fill="none" stroke="#047857" stroke-width="2.2" stroke-linecap="round" stroke-linejoin="round"><rect width="20" height="14" x="2" y="5" rx="2"/><line x1="2" x2="22" y1="10" y2="10"/></svg><div class="t" style="left:1320.8px;top:756.0px;height:16px;line-height:16px;font-size:12px;color:#047857;font-weight:400;letter-spacing:-0.09px;-webkit-text-stroke:0.25px #047857;">Payee</div><div class="b" style="left:1368.7px;top:754px;width:91.1px;height:20px;background:#fff7ed;border-radius:999px"></div><svg class="ic" style="left:1377px;top:758px;width:12.5px;height:12.5px" viewBox="0 0 24 24" fill="none" stroke="#ea580c" stroke-width="2.2" stroke-linecap="round" stroke-linejoin="round"><circle cx="12" cy="12" r="10"/><polyline points="12 6 12 12 16 14"/></svg><div class="t" style="left:1393px;top:756.0px;height:16px;line-height:16px;font-size:12px;color:#c2410c;font-weight:400;letter-spacing:0.38px;-webkit-text-stroke:0.25px #c2410c;">En attente</div><svg class="ic" style="left:1468.5px;top:757.5px;width:13px;height:13px" viewBox="0 0 24 24" fill="none" stroke="#9ca3af" stroke-width="2" stroke-linecap="round" stroke-linejoin="round"><path d="M3 12a9 9 0 0 1 9-9 9.75 9.75 0 0 1 6.74 2.74L21 8"/><path d="M21 3v5h-5"/><path d="M21 12a9 9 0 0 1-9 9 9.75 9.75 0 0 1-6.74-2.74L3 16"/><path d="M8 16H3v5"/></svg><svg class="ic" style="left:1634px;top:756px;width:16px;height:16px" viewBox="0 0 24 24" fill="none" stroke="#9ca3af" stroke-width="1.9" stroke-linecap="round" stroke-linejoin="round"><path d="M2 12s3-7 10-7 10 7 10 7-3 7-10 7-10-7-10-7Z"/><circle cx="12" cy="12" r="3"/></svg><svg class="ic" style="left:1664px;top:756px;width:16px;height:16px" viewBox="0 0 24 24" fill="none" stroke="#9ca3af" stroke-width="1.9" stroke-linecap="round" stroke-linejoin="round"><path d="M21 15v4a2 2 0 0 1-2 2H5a2 2 0 0 1-2-2v-4"/><polyline points="7 10 12 15 17 10"/><line x1="12" x2="12" y1="15" y2="3"/></svg><svg class="ic" style="left:1694px;top:756px;width:16px;height:16px" viewBox="0 0 24 24" fill="none" stroke="#9ca3af" stroke-width="1.9" stroke-linecap="round" stroke-linejoin="round"><path d="M10 12.5 8 15l2 2.5"/><path d="m14 12.5 2 2.5-2 2.5"/><path d="M14 2v4a2 2 0 0 0 2 2h4"/><path d="M15 2H6a2 2 0 0 0-2 2v16a2 2 0 0 0 2 2h12a2 2 0 0 0 2-2V7z"/></svg><div class="b" style="left:0px;top:843px;width:1733px;height:1px;background:#e5e7eb"></div><div class="b" style="left:11.799999999999997px;top:809.25px;width:15.5px;height:15.5px;border:1.4px solid #707070;border-radius:4px;box-sizing:border-box;background:#fff"></div><div class="t" style="left:56px;top:808.0px;height:18px;line-height:18px;font-size:14px;color:#111827;font-weight:400;letter-spacing:0.6px;">20/03/2026</div><div class="t" style="left:171.5px;top:808.0px;height:18px;line-height:18px;font-size:14px;color:#111827;font-weight:400;letter-spacing:0.54px;-webkit-text-stroke:0.2px #111827;">Facture-24</div><div class="b" style="left:251.39999999999998px;top:805px;width:52.4px;height:24px;background:#f3e8ff;border-radius:8px"></div><div class="t" style="left:257.79999999999995px;top:811.5999999999999px;height:12px;line-height:12px;font-size:9.5px;color:#7e22ce;font-weight:700;letter-spacing:0.2px;">PEPPOL</div><div class="b" style="left:449.6px;top:809px;width:49px;height:20px;background:#dbeafe;border-radius:999px"></div><div class="t" style="left:457.79999999999995px;top:810.5999999999999px;height:16px;line-height:16px;font-size:12px;color:#1d4ed8;font-weight:400;letter-spacing:0.3px;-webkit-text-stroke:0.25px #1d4ed8;">Achat</div><div class="t" style="left:536.5px;top:808.0px;height:18px;line-height:18px;font-size:14px;color:#1f2937;font-weight:400;letter-spacing:0.09px;">Échafaudage Bodart SPRL</div><div class="b" style="left:752.9px;top:818px;width:4.8px;height:1.3px;background:#9ca3af"></div><div class="b" style="left:871.3px;top:815px;width:8.3px;height:8.3px;background:#10b981;border-radius:50%"></div><div class="t" style="left:884px;top:811.0px;height:16px;line-height:16px;font-size:12px;color:#374151;font-weight:400;letter-spacing:-0.29px;">ARDENNE GESTION</div><div class="b" style="left:1055.6px;top:817.5px;width:4.8px;height:1.3px;background:#9ca3af"></div><div class="t" style="right:476px;top:807px;height:20px;line-height:20px;font-size:14px;color:#111827;letter-spacing:0.4px;-webkit-text-stroke:0.2px #111827">2<span style="display:inline-block;width:2.6px"></span>158,53 €</div><div class="b" style="left:1358px;top:807px;width:66.3px;height:20px;background:#d1fae5;border-radius:999px"></div><svg class="ic" style="left:1365.5px;top:811px;width:12.5px;height:12.5px" viewBox="0 0 24 24" fill="none" stroke="#047857" stroke-width="2.2" stroke-linecap="round" stroke-linejoin="round"><rect width="20" height="14" x="2" y="5" rx="2"/><line x1="2" x2="22" y1="10" y2="10"/></svg><div class="t" style="left:1382.4px;top:809.0px;height:16px;line-height:16px;font-size:12px;color:#047857;font-weight:400;letter-spacing:-0.09px;-webkit-text-stroke:0.25px #047857;">Payee</div><svg class="ic" style="left:1544px;top:809px;width:16px;height:16px" viewBox="0 0 24 24" fill="none" stroke="#9ca3af" stroke-width="1.9" stroke-linecap="round" stroke-linejoin="round"><path d="M2 12s3-7 10-7 10 7 10 7-3 7-10 7-10-7-10-7Z"/><circle cx="12" cy="12" r="3"/></svg><svg class="ic" style="left:1574px;top:809px;width:16px;height:16px" viewBox="0 0 24 24" fill="none" stroke="#9ca3af" stroke-width="1.9" stroke-linecap="round" stroke-linejoin="round"><path d="M3 12a9 9 0 1 0 9-9 9.75 9.75 0 0 0-6.74 2.74L3 8"/><path d="M3 3v5h5"/></svg><svg class="ic" style="left:1604px;top:809px;width:16px;height:16px" viewBox="0 0 24 24" fill="none" stroke="#9ca3af" stroke-width="1.9" stroke-linecap="round" stroke-linejoin="round"><path d="m16 3 4 4-4 4"/><path d="M20 7H4"/><path d="m8 21-4-4 4-4"/><path d="M4 17h16"/></svg><svg class="ic" style="left:1634px;top:809px;width:16px;height:16px" viewBox="0 0 24 24" fill="none" stroke="#9ca3af" stroke-width="1.9" stroke-linecap="round" stroke-linejoin="round"><path d="M21 15v4a2 2 0 0 1-2 2H5a2 2 0 0 1-2-2v-4"/><polyline points="7 10 12 15 17 10"/><line x1="12" x2="12" y1="15" y2="3"/></svg><svg class="ic" style="left:1664px;top:809px;width:16px;height:16px" viewBox="0 0 24 24" fill="none" stroke="#9ca3af" stroke-width="1.9" stroke-linecap="round" stroke-linejoin="round"><path d="M10 12.5 8 15l2 2.5"/><path d="m14 12.5 2 2.5-2 2.5"/><path d="M14 2v4a2 2 0 0 0 2 2h4"/><path d="M15 2H6a2 2 0 0 0-2 2v16a2 2 0 0 0 2 2h12a2 2 0 0 0 2-2V7z"/></svg><svg class="ic" style="left:1694px;top:809px;width:16px;height:16px" viewBox="0 0 24 24" fill="none" stroke="#9ca3af" stroke-width="1.9" stroke-linecap="round" stroke-linejoin="round"><path d="M3 6h18"/><path d="M19 6v14c0 1-1 2-2 2H7c-1 0-2-1-2-2V6"/><path d="M8 6V4c0-1 1-2 2-2h4c1 0 2 1 2 2v2"/><line x1="10" x2="10" y1="11" y2="17"/><line x1="14" x2="14" y1="11" y2="17"/></svg><div class="b" style="left:0px;top:896px;width:1733px;height:1px;background:#e5e7eb"></div><div class="b" style="left:11.799999999999997px;top:862.25px;width:15.5px;height:15.5px;border:1.4px solid #707070;border-radius:4px;box-sizing:border-box;background:#fff"></div><div class="t" style="left:56px;top:861.0px;height:18px;line-height:18px;font-size:14px;color:#111827;font-weight:400;letter-spacing:0.6px;">20/03/2026</div><div class="t" style="left:171.5px;top:861.0px;height:18px;line-height:18px;font-size:14px;color:#111827;font-weight:400;letter-spacing:0.312px;-webkit-text-stroke:0.2px #111827;">20/412159</div><div class="b" style="left:247.3px;top:858px;width:52.4px;height:24px;background:#f3e8ff;border-radius:8px"></div><div class="t" style="left:253.7px;top:864.5999999999999px;height:12px;line-height:12px;font-size:9.5px;color:#7e22ce;font-weight:700;letter-spacing:0.2px;">PEPPOL</div><div class="b" style="left:449.6px;top:862px;width:49px;height:20px;background:#dbeafe;border-radius:999px"></div><div class="t" style="left:457.79999999999995px;top:863.5999999999999px;height:16px;line-height:16px;font-size:12px;color:#1d4ed8;font-weight:400;letter-spacing:0.3px;-webkit-text-stroke:0.25px #1d4ed8;">Achat</div><div class="t" style="left:536.5px;top:861.0px;height:18px;line-height:18px;font-size:14px;color:#1f2937;font-weight:400;letter-spacing:0.09px;">Bricolage Martin SRL</div><div class="b" style="left:752.9px;top:871px;width:4.8px;height:1.3px;background:#9ca3af"></div><div class="b" style="left:871.3px;top:868px;width:8.3px;height:8.3px;background:#10b981;border-radius:50%"></div><div class="t" style="left:884px;top:864.0px;height:16px;line-height:16px;font-size:12px;color:#374151;font-weight:400;letter-spacing:-0.29px;">ARDENNE GESTION</div><div class="b" style="left:1055.6px;top:870.5px;width:4.8px;height:1.3px;background:#9ca3af"></div><div class="t" style="right:476px;top:860px;height:20px;line-height:20px;font-size:14px;color:#111827;letter-spacing:0.4px;-webkit-text-stroke:0.2px #111827">538,61 €</div><div class="b" style="left:1358px;top:860px;width:66.3px;height:20px;background:#d1fae5;border-radius:999px"></div><svg class="ic" style="left:1365.5px;top:864px;width:12.5px;height:12.5px" viewBox="0 0 24 24" fill="none" stroke="#047857" stroke-width="2.2" stroke-linecap="round" stroke-linejoin="round"><rect width="20" height="14" x="2" y="5" rx="2"/><line x1="2" x2="22" y1="10" y2="10"/></svg><div class="t" style="left:1382.4px;top:862.0px;height:16px;line-height:16px;font-size:12px;color:#047857;font-weight:400;letter-spacing:-0.09px;-webkit-text-stroke:0.25px #047857;">Payee</div><svg class="ic" style="left:1544px;top:862px;width:16px;height:16px" viewBox="0 0 24 24" fill="none" stroke="#9ca3af" stroke-width="1.9" stroke-linecap="round" stroke-linejoin="round"><path d="M2 12s3-7 10-7 10 7 10 7-3 7-10 7-10-7-10-7Z"/><circle cx="12" cy="12" r="3"/></svg><svg class="ic" style="left:1574px;top:862px;width:16px;height:16px" viewBox="0 0 24 24" fill="none" stroke="#9ca3af" stroke-width="1.9" stroke-linecap="round" stroke-linejoin="round"><path d="M3 12a9 9 0 1 0 9-9 9.75 9.75 0 0 0-6.74 2.74L3 8"/><path d="M3 3v5h5"/></svg><svg class="ic" style="left:1604px;top:862px;width:16px;height:16px" viewBox="0 0 24 24" fill="none" stroke="#9ca3af" stroke-width="1.9" stroke-linecap="round" stroke-linejoin="round"><path d="m16 3 4 4-4 4"/><path d="M20 7H4"/><path d="m8 21-4-4 4-4"/><path d="M4 17h16"/></svg><svg class="ic" style="left:1634px;top:862px;width:16px;height:16px" viewBox="0 0 24 24" fill="none" stroke="#9ca3af" stroke-width="1.9" stroke-linecap="round" stroke-linejoin="round"><path d="M21 15v4a2 2 0 0 1-2 2H5a2 2 0 0 1-2-2v-4"/><polyline points="7 10 12 15 17 10"/><line x1="12" x2="12" y1="15" y2="3"/></svg><svg class="ic" style="left:1664px;top:862px;width:16px;height:16px" viewBox="0 0 24 24" fill="none" stroke="#9ca3af" stroke-width="1.9" stroke-linecap="round" stroke-linejoin="round"><path d="M10 12.5 8 15l2 2.5"/><path d="m14 12.5 2 2.5-2 2.5"/><path d="M14 2v4a2 2 0 0 0 2 2h4"/><path d="M15 2H6a2 2 0 0 0-2 2v16a2 2 0 0 0 2 2h12a2 2 0 0 0 2-2V7z"/></svg><svg class="ic" style="left:1694px;top:862px;width:16px;height:16px" viewBox="0 0 24 24" fill="none" stroke="#9ca3af" stroke-width="1.9" stroke-linecap="round" stroke-linejoin="round"><path d="M3 6h18"/><path d="M19 6v14c0 1-1 2-2 2H7c-1 0-2-1-2-2V6"/><path d="M8 6V4c0-1 1-2 2-2h4c1 0 2 1 2 2v2"/><line x1="10" x2="10" y1="11" y2="17"/><line x1="14" x2="14" y1="11" y2="17"/></svg><div class="b" style="left:0px;top:949px;width:1733px;height:1px;background:#e5e7eb"></div><div class="b" style="left:11.799999999999997px;top:915.25px;width:15.5px;height:15.5px;border:1.4px solid #707070;border-radius:4px;box-sizing:border-box;background:#fff"></div><div class="t" style="left:56px;top:914.0px;height:18px;line-height:18px;font-size:14px;color:#111827;font-weight:400;letter-spacing:0.6px;"><span style="margin-left:-1.2px;letter-spacing:-0.7px">1</span>9/03/2026</div><div class="t" style="left:171.5px;top:914.0px;height:18px;line-height:18px;font-size:14px;color:#111827;font-weight:400;letter-spacing:0.282px;-webkit-text-stroke:0.2px #111827;">2217955012</div><div class="b" style="left:259.0px;top:911px;width:52.4px;height:24px;background:#f3e8ff;border-radius:8px"></div><div class="t" style="left:265.4px;top:917.5999999999999px;height:12px;line-height:12px;font-size:9.5px;color:#7e22ce;font-weight:700;letter-spacing:0.2px;">PEPPOL</div><div class="b" style="left:449.6px;top:915px;width:49px;height:20px;background:#dbeafe;border-radius:999px"></div><div class="t" style="left:457.79999999999995px;top:916.5999999999999px;height:16px;line-height:16px;font-size:12px;color:#1d4ed8;font-weight:400;letter-spacing:0.3px;-webkit-text-stroke:0.25px #1d4ed8;">Achat</div><div class="t" style="left:536.5px;top:914.0px;height:18px;line-height:18px;font-size:14px;color:#1f2937;font-weight:400;letter-spacing:0.09px;">Chauffage Simon SA</div><div class="b" style="left:752.9px;top:924px;width:4.8px;height:1.3px;background:#9ca3af"></div><div class="b" style="left:871.3px;top:921px;width:8.3px;height:8.3px;background:#10b981;border-radius:50%"></div><div class="t" style="left:884px;top:917.0px;height:16px;line-height:16px;font-size:12px;color:#374151;font-weight:400;letter-spacing:-0.29px;">ARDENNE GESTION</div><div class="b" style="left:1055.6px;top:923.5px;width:4.8px;height:1.3px;background:#9ca3af"></div><div class="t" style="right:476px;top:913px;height:20px;line-height:20px;font-size:14px;color:#111827;letter-spacing:0.4px;-webkit-text-stroke:0.2px #111827">12,40 €</div><div class="b" style="left:1358px;top:913px;width:66.3px;height:20px;background:#d1fae5;border-radius:999px"></div><svg class="ic" style="left:1365.5px;top:917px;width:12.5px;height:12.5px" viewBox="0 0 24 24" fill="none" stroke="#047857" stroke-width="2.2" stroke-linecap="round" stroke-linejoin="round"><rect width="20" height="14" x="2" y="5" rx="2"/><line x1="2" x2="22" y1="10" y2="10"/></svg><div class="t" style="left:1382.4px;top:915.0px;height:16px;line-height:16px;font-size:12px;color:#047857;font-weight:400;letter-spacing:-0.09px;-webkit-text-stroke:0.25px #047857;">Payee</div><svg class="ic" style="left:1544px;top:915px;width:16px;height:16px" viewBox="0 0 24 24" fill="none" stroke="#9ca3af" stroke-width="1.9" stroke-linecap="round" stroke-linejoin="round"><path d="M2 12s3-7 10-7 10 7 10 7-3 7-10 7-10-7-10-7Z"/><circle cx="12" cy="12" r="3"/></svg><svg class="ic" style="left:1574px;top:915px;width:16px;height:16px" viewBox="0 0 24 24" fill="none" stroke="#9ca3af" stroke-width="1.9" stroke-linecap="round" stroke-linejoin="round"><path d="M3 12a9 9 0 1 0 9-9 9.75 9.75 0 0 0-6.74 2.74L3 8"/><path d="M3 3v5h5"/></svg><svg class="ic" style="left:1604px;top:915px;width:16px;height:16px" viewBox="0 0 24 24" fill="none" stroke="#9ca3af" stroke-width="1.9" stroke-linecap="round" stroke-linejoin="round"><path d="m16 3 4 4-4 4"/><path d="M20 7H4"/><path d="m8 21-4-4 4-4"/><path d="M4 17h16"/></svg><svg class="ic" style="left:1634px;top:915px;width:16px;height:16px" viewBox="0 0 24 24" fill="none" stroke="#9ca3af" stroke-width="1.9" stroke-linecap="round" stroke-linejoin="round"><path d="M21 15v4a2 2 0 0 1-2 2H5a2 2 0 0 1-2-2v-4"/><polyline points="7 10 12 15 17 10"/><line x1="12" x2="12" y1="15" y2="3"/></svg><svg class="ic" style="left:1664px;top:915px;width:16px;height:16px" viewBox="0 0 24 24" fill="none" stroke="#9ca3af" stroke-width="1.9" stroke-linecap="round" stroke-linejoin="round"><path d="M10 12.5 8 15l2 2.5"/><path d="m14 12.5 2 2.5-2 2.5"/><path d="M14 2v4a2 2 0 0 0 2 2h4"/><path d="M15 2H6a2 2 0 0 0-2 2v16a2 2 0 0 0 2 2h12a2 2 0 0 0 2-2V7z"/></svg><svg class="ic" style="left:1694px;top:915px;width:16px;height:16px" viewBox="0 0 24 24" fill="none" stroke="#9ca3af" stroke-width="1.9" stroke-linecap="round" stroke-linejoin="round"><path d="M3 6h18"/><path d="M19 6v14c0 1-1 2-2 2H7c-1 0-2-1-2-2V6"/><path d="M8 6V4c0-1 1-2 2-2h4c1 0 2 1 2 2v2"/><line x1="10" x2="10" y1="11" y2="17"/><line x1="14" x2="14" y1="11" y2="17"/></svg></div>
</body></html>
